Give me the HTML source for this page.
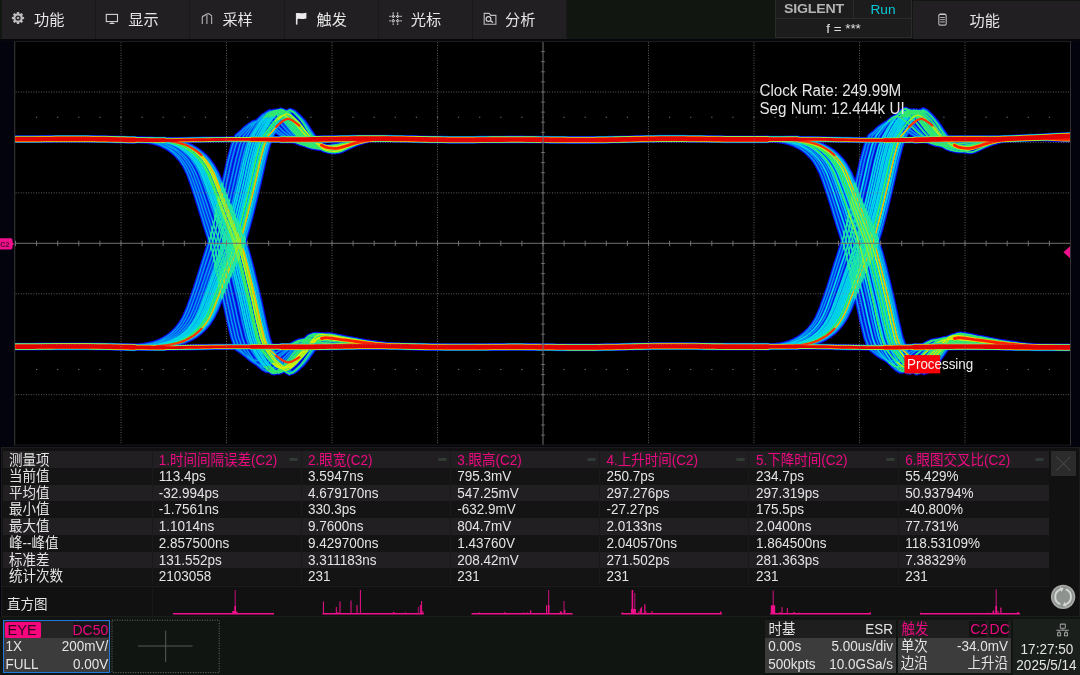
<!DOCTYPE html>
<html lang="zh-CN">
<head>
<meta charset="utf-8">
<title>SIGLENT Eye Diagram</title>
<style>
*{box-sizing:border-box;margin:0;padding:0}
html,body{width:1080px;height:675px;overflow:hidden;background:#02030d}
body{position:relative;will-change:transform;font-family:"Liberation Sans","Noto Sans CJK SC",sans-serif;font-size:13.5px;color:#e4e4e4;line-height:1}
.abs{position:absolute}
.t{transform:scaleY(1.06);transform-origin:0 80%}
/* top bar */
#top{position:absolute;left:0;top:0;width:1080px;height:39px;background:#111611}
.mb{position:absolute;top:0;height:38.5px;background:#221f22;border-right:1px solid #1a181a}
.mb span{position:absolute;left:32px;top:11.6px;font-size:15.2px;line-height:16px;color:#e6e6e6;white-space:nowrap}
.mb svg{position:absolute;left:9.2px;top:11.1px;width:14px;height:14px;overflow:visible}
#topline{position:absolute;left:0;top:38.5px;width:1080px;height:3px;background:#05060c}
#sig{position:absolute;left:775px;top:0;width:137px;height:38px;background:#1c1c1c;border:1px solid #2b2b2b;border-top:none}
#sig .l{position:absolute;left:0;top:0;width:78px;height:18.5px;border-right:1px solid #2b2b2b;border-bottom:1px solid #2b2b2b}
#sig .r{position:absolute;left:78px;top:0;width:58px;height:18.5px;border-bottom:1px solid #2b2b2b}
#logo{position:absolute;left:8.4px;top:2.2px;font-weight:bold;font-size:13.3px;line-height:14px;color:#b4b4b4;letter-spacing:-0.2px;white-space:nowrap;transform-origin:0 50%;transform:scaleX(1.065)}
#run{position:absolute;left:0;width:58px;top:1.8px;text-align:center;font-size:13.7px;line-height:15px;color:#0bc6d6}
#freq{position:absolute;left:0;width:135px;top:20.6px;text-align:center;font-size:13.4px;line-height:15px;color:#e0e0e0}
#rb{position:absolute;left:912.5px;top:0.5px;width:167.5px;height:38px;background:#221f22}
#rb span{position:absolute;left:57px;top:12.5px;font-size:15.2px;line-height:16px;color:#e6e6e6}
/* grid */
#scope{position:absolute;left:0;top:39px;width:1080px;height:409px}
/* table */
#panel{position:absolute;left:0.5px;top:447px;width:1079px;height:169.5px;background:#111111;border:1px solid #1d1d1d}
.row{position:absolute;left:3.2px;width:1045.8px;height:16.75px}
.row.a{background:#221f22}
.row.b{background:#141414}
.cell{transform:scaleY(1.06);transform-origin:0 77%;position:absolute;top:1px;height:100%;white-space:nowrap;font-size:13.5px;line-height:16.75px}
.pk{color:#ea0a80}
.sep{position:absolute;top:451px;width:1px;height:134px;background:#1a1a1a}
.dash{position:absolute;top:457.6px;width:9px;height:3px;border-radius:1.4px;background:#2f3b34}
/* bottom */
#bot{position:absolute;left:0;top:617px;width:1080px;height:58px;background:#111511}
.box{position:absolute;top:620px;height:53px;background:#3c3c3c}
.box .t{position:absolute;white-space:nowrap;font-size:13.5px;line-height:15px}
</style>
</head>
<body>
<div id="top">
  <div class="mb" style="left:2px;width:94.2px"><svg viewBox="0 0 14 14"><g fill="#bdbdbd"><g id="gt"><path d="M5.5 3.6L5.9 0.9H8.1L8.5 3.6Z"/></g><use href="#gt" transform="rotate(45 7 7)"/><use href="#gt" transform="rotate(90 7 7)"/><use href="#gt" transform="rotate(135 7 7)"/><use href="#gt" transform="rotate(180 7 7)"/><use href="#gt" transform="rotate(225 7 7)"/><use href="#gt" transform="rotate(270 7 7)"/><use href="#gt" transform="rotate(315 7 7)"/></g><circle cx="7" cy="7" r="3.55" fill="none" stroke="#bdbdbd" stroke-width="1.9"/><circle cx="7" cy="7" r="1.35" fill="#a8a8a8"/></svg><span>功能</span></div>
  <div class="mb" style="left:96.2px;width:94.2px"><svg viewBox="0 0 14 14"><rect x="1.3" y="3.4" width="11.2" height="7.2" fill="none" stroke="#d2d2d2" stroke-width="1.1"/><path d="M7 10.6V12.4M4.6 12.5H9.4" stroke="#d2d2d2" stroke-width="1.1" fill="none"/></svg><span>显示</span></div>
  <div class="mb" style="left:190.4px;width:94.2px"><svg viewBox="0 0 14 14"><path d="M2 5.6C4.5 5.2 6 2.6 8.2 2.6C10 2.6 11 4.2 12 5.4" fill="none" stroke="#b8b8b8" stroke-width="1.1"/><path d="M2.3 5.8V13M6.9 4V13M11.6 5.4V13" stroke="#a8a8a8" stroke-width="1.2" fill="none"/></svg><span>采样</span></div>
  <div class="mb" style="left:284.6px;width:94.2px"><svg viewBox="0 0 14 14"><path d="M2.7 2V13.6" stroke="#e0e0e0" stroke-width="1.6" fill="none"/><path d="M3 2.2C5.5 1.2 7.6 3 12.4 1.8V7.6C8.5 8.8 6 7 3 8.2Z" fill="#ececec"/></svg><span>触发</span></div>
  <div class="mb" style="left:378.8px;width:94.2px"><svg viewBox="0 0 14 14"><path d="M5.2 1.4V13.8M9.6 1.4V13.8M1.4 5.4H13.8M1.4 9.8H13.8" stroke="#dcdcdc" stroke-width="1.3" stroke-dasharray="1.3 0.9" fill="none"/></svg><span>光标</span></div>
  <div class="mb" style="left:473px;width:94.2px"><svg viewBox="0 0 14 14"><path d="M2.2 13.2V2.4H7.2L8.8 4.4H13.9V13.2Z" fill="none" stroke="#bdbdbd" stroke-width="1.1"/><circle cx="6.5" cy="8" r="2.4" fill="none" stroke="#d8d8d8" stroke-width="1.1"/><path d="M8.3 9.6L11 11.6" stroke="#d8d8d8" stroke-width="1.2"/></svg><span>分析</span></div>
  <div id="sig"><div class="l"><div id="logo">SIGLENT</div></div><div class="r"><div id="run">Run</div></div><div id="freq">f = ***</div></div>
  <div id="rb"><svg style="position:absolute;left:24px;top:12.5px;width:11px;height:14px;overflow:visible" viewBox="0 0 11 14" fill="none"><rect x="1.8" y="1.3" width="7.4" height="10.8" rx="1.3" stroke="#b2b2b2" stroke-width="1.15"/><path d="M2.6 1.2H8.4" stroke="#d6d6d6" stroke-width="1.1"/><path d="M3.2 4.5H7.8M3.2 6.6H7.8" stroke="#d2d2d2" stroke-width="0.8"/><path d="M3.2 8.9H7.8" stroke="#8c8c8c" stroke-width="1.5"/></svg><span>功能</span></div>
</div>
<div id="topline"></div>
<svg id="scope" viewBox="0 39 1080 409" width="1080" height="409">
<defs>
<clipPath id="gc"><rect x="15.2" y="42.0" width="1054.8" height="402.7"/></clipPath>
<clipPath id="br1"><path d="M150.9 343.2 154.9 342.0 158.8 340.4 162.8 338.3 166.7 335.9 170.6 332.7 174.4 328.8 178.3 323.9 182.1 317.5 185.9 308.8 189.7 298.1 193.4 287.4 196.8 276.3 200.1 265.3 203.5 254.7 207.0 243.1 210.7 228.7 214.4 212.4 218.2 195.7 222.2 178.7 226.3 160.6 230.3 145.4 234.4 135.8 238.4 128.7 242.6 122.5 246.7 117.6 L286.3 117.6 282.4 122.5 278.6 128.7 274.6 135.8 270.7 145.4 266.7 160.6 262.8 178.7 258.8 195.7 254.6 212.4 250.3 228.7 246.0 243.1 241.5 254.7 236.9 265.3 232.2 276.3 227.6 287.4 223.3 298.1 219.1 308.8 214.9 317.5 210.7 323.9 206.6 328.8 202.4 332.7 198.3 335.9 194.2 338.3 190.2 340.4 186.1 342.0 182.1 343.2Z"/></clipPath>
<clipPath id="bf1"><path d="M150.9 142.4 154.9 143.4 158.8 144.8 162.8 146.6 166.7 148.9 170.6 151.7 174.4 155.2 178.3 159.6 182.1 165.3 185.9 172.8 189.7 183.0 193.4 194.0 196.8 205.1 200.1 216.5 203.5 227.4 207.0 238.6 210.7 252.2 214.4 268.4 218.2 285.5 222.2 302.6 226.3 321.1 230.3 337.8 234.4 348.8 238.4 356.3 242.6 362.8 246.7 368.0 L286.3 368.0 282.4 362.8 278.6 356.3 274.6 348.8 270.7 337.8 266.7 321.1 262.8 302.6 258.8 285.5 254.6 268.4 250.3 252.2 246.0 238.6 241.5 227.4 236.9 216.5 232.2 205.1 227.6 194.0 223.3 183.0 219.1 172.8 214.9 165.3 210.7 159.6 206.6 155.2 202.4 151.7 198.3 148.9 194.2 146.6 190.2 144.8 186.1 143.4 182.1 142.4Z"/></clipPath>
<clipPath id="br2"><path d="M783.9 343.2 787.9 342.0 791.8 340.4 795.8 338.3 799.7 335.9 803.6 332.7 807.4 328.8 811.3 323.9 815.1 317.5 818.9 308.8 822.7 298.1 826.4 287.4 829.8 276.3 833.1 265.3 836.5 254.7 840.0 243.1 843.7 228.7 847.4 212.4 851.2 195.7 855.2 178.7 859.3 160.6 863.3 145.4 867.4 135.8 871.4 128.7 875.6 122.5 879.7 117.6 L919.3 117.6 915.4 122.5 911.6 128.7 907.6 135.8 903.7 145.4 899.7 160.6 895.8 178.7 891.8 195.7 887.6 212.4 883.3 228.7 879.0 243.1 874.5 254.7 869.9 265.3 865.2 276.3 860.6 287.4 856.3 298.1 852.1 308.8 847.9 317.5 843.7 323.9 839.6 328.8 835.4 332.7 831.3 335.9 827.2 338.3 823.2 340.4 819.1 342.0 815.1 343.2Z"/></clipPath>
<clipPath id="bf2"><path d="M783.9 142.4 787.9 143.4 791.8 144.8 795.8 146.6 799.7 148.9 803.6 151.7 807.4 155.2 811.3 159.6 815.1 165.3 818.9 172.8 822.7 183.0 826.4 194.0 829.8 205.1 833.1 216.5 836.5 227.4 840.0 238.6 843.7 252.2 847.4 268.4 851.2 285.5 855.2 302.6 859.3 321.1 863.3 337.8 867.4 348.8 871.4 356.3 875.6 362.8 879.7 368.0 L919.3 368.0 915.4 362.8 911.6 356.3 907.6 348.8 903.7 337.8 899.7 321.1 895.8 302.6 891.8 285.5 887.6 268.4 883.3 252.2 879.0 238.6 874.5 227.4 869.9 216.5 865.2 205.1 860.6 194.0 856.3 183.0 852.1 172.8 847.9 165.3 843.7 159.6 839.6 155.2 835.4 151.7 831.3 148.9 827.2 146.6 823.2 144.8 819.1 143.4 815.1 142.4Z"/></clipPath>
<path id="r1lo" d="M108.5 346.6l4 0 4-0.1 4-0.1 4-0.1 4-0.2 4-0.2 4-0.3 4-0.4 4-0.5 4-0.8 4-0.9 4-1.2 4-1.6 3.9-2.1 3.9-2.5 3.9-3.1 3.9-3.9 3.9-4.9 3.8-6.5 3.8-8.7 3.8-10.6 3.7-10.7 3.5-11.1 3.4-11 3.4-10.6 3.6-11.6 3.7-14.4 3.7-16.3 3.9-16.7 4-17 4-18.1 4.1-15.2 4-9.6 4.1-3.4 4.1-4 4.1-3.2 4.1-2.7 4.2-1.3 4.1 1.1 4.2 2.4 4.2 2.5 4.4 3.3 4.7 3.4 4.9 2.8 5 2.6 4.9 2.3 4.9 1.9 4.9 1.6 5 1 4.9 0.6 4.9 0.4 4.8 0 4.9-0.5 4.8-0.9 4.9-0.8 4.7-1 4.5-0.9 4.4-0.9 4-0.8 4-0.7 4-0.6 4-0.6 4-0.6 4-0.4 4-0.1 4 0 4 0 4 0.1 4 0 4 0 4 0.1 4 0.1 4 0.2 4 0.2 4 0.2 4 0.1 4 0.1 4 0 4 0M111.1 346.8l4-0.1 4 0 4-0.1 4-0.1 4-0.2 4-0.2 4-0.3 4-0.4 4-0.6 4-0.7 4-0.9 3.9-1.2 4-1.6 4-2.1 3.9-2.5 3.9-3.2 3.9-3.8 3.9-4.9 3.9-6.5 3.8-8.7 3.9-10.6 3.7-10.7 3.6-11.1 3.5-11 3.5-10.6 3.7-11.6 3.8-14.4 3.7-16.3 3.9-16.7 4-17 4-18.1 4.1-15.2 4-9.6 4.1-3.9 4.1-4.4 4.1-3.4 4.1-2.9 4.1-1.5 4.1 1.2 4.2 2.6 4.1 2.8 4.4 3.5 4.5 3.6 4.8 3.1 4.7 2.8 4.8 2.1 4.7 1.7 4.8 1.5 4.8 0.9 4.7 0.5 4.8 0.4 4.6 0 4.7-0.4 4.7-0.8 4.7-0.8 4.6-0.9 4.4-0.9 4.3-0.8 4-0.7 4-0.6 4-0.6 4-0.5 4-0.6 4-0.5 4-0.1 4 0 4 0 4 0.1 4 0 4 0 4 0.1 4 0.1 4 0.2 4 0.2 4 0.2 4 0.2 4 0.1 4 0 4 0M114.1 346.8l4-0.1 4 0 4-0.1 4-0.2 4-0.1 4-0.2 4-0.3 4-0.5 4-0.5 4-0.7 4-0.9 4-1.2 3.9-1.7 4-2 4-2.5 3.9-3.2 3.9-3.9 3.9-4.9 3.9-6.4 3.9-8.7 3.9-10.6 3.8-10.7 3.7-11.1 3.7-11.1 3.6-10.5 3.8-11.6 3.8-14.4 3.8-16.3 3.9-16.7 4-17.1 4.1-18 4-15.3 4-9.6 4.1-4.8 4-4.9 4.1-3.8 4.1-3.3 4.1-1.6 4.1 1.3 4.1 2.9 4.1 3.1 4.2 4 4.4 4.1 4.6 3.4 4.6 3.2 4.5 2.9 4.5 2.3 4.6 2 4.6 1.3 4.6 0.7 4.5 0.5 4.5 0 4.5-0.6 4.5-1.1 4.5-1.1 4.4-1.1 4.4-1.3 4.2-1.1 4-0.9 4-0.9 4-0.8 4-0.8 4-0.6 4-0.5 4-0.1 4 0 4 0 4 0 4 0 4 0.1 4 0.1 4 0.1 4 0.2 4 0.3 4 0.2 4 0.2 4 0.1 4 0 4 0M116.6 347l4 0 4-0.1 4-0.1 4-0.1 4-0.2 4-0.2 4-0.3 4-0.4 4-0.5 4-0.8 4-0.9 4-1.2 4-1.6 4-2.1 3.9-2.5 4-3.1 3.9-3.9 4-4.9 3.9-6.5 3.9-8.7 4-10.6 3.8-10.7 3.8-11.1 3.8-11 3.7-10.6 3.8-11.6 3.9-14.4 3.9-16.3 3.9-16.7 4-17 4.1-18.1 4-15.2 4-9.6 4-6.5 4.1-5.9 4-4.6 4.1-3.9 4-2 4.1 1.6 4.1 3.4 4.1 3.8 4.1 4.7 4.3 4.9 4.4 4.2 4.4 3.8 4.4 2 4.3 1.6 4.4 1.3 4.5 0.8 4.4 0.5 4.3 0.3 4.4 0.1 4.3-0.4 4.4-0.8 4.3-0.7 4.3-0.8 4.3-0.8 4.1-0.8 4-0.6 4-0.6 4-0.5 4-0.5 4-0.9 4-0.5 4-0.2 4 0 4 0.1 4 0 4 0 4 0.1 4 0.1 4 0.1 4 0.3 4 0.3 4 0.3 4 0.2 4 0.1 4 0 4 0M119.1 347.1l4-0.1 4 0 4-0.1 4-0.1 4-0.2 4-0.2 4-0.3 4-0.5 4-0.5 4-0.7 4-0.9 3.9-1.2 4-1.6 4-2.1 4-2.5 4-3.2 3.9-3.8 4-4.9 4-6.5 3.9-8.7 4-10.6 3.9-10.7 3.9-11.1 3.8-11.1 3.9-10.5 3.9-11.6 3.9-14.4 4-16.3 3.9-16.7 4-17.1 4-18 4-15.2 4-9.6 4.1-7.4 4-6.3 4-5 4-4.2 4.1-2.2 4 1.7 4.1 3.8 4 4 4.1 5.1 4.2 5.4 4.2 4.5 4.2 4 4.3 2.3 4.2 1.9 4.2 1.5 4.3 1 4.2 0.5 4.2 0.4 4.2 0.1 4.2-0.5 4.2-0.9 4.2-0.8 4.2-0.9 4.2-1 4-0.8 4-0.8 4-0.6 4-0.6 4-0.7 4-0.8 4-0.7 4-0.1 4 0 4 0 4 0.1 4 0 4 0.1 4 0 4 0.2 4 0.3 4 0.3 4 0.3 4 0.3 4 0.1 4 0 4 0M135.5 346.8l4 0 4-0.1 4-0.1 4-0.1 4-0.2 4-0.2 4-0.3 4-0.4 4-0.5 4-0.8 4-0.9 4-1.2 4-1.6 4.1-2.1 4-2.5 4.1-3.1 4.2-3.9 4.1-4.9 4.1-6.5 4.2-8.7 4.1-10.6 4.3-10.7 4.5-11.1 4.6-11 4.5-10.6 4.4-11.6 4.3-14.4 4.2-16.3 4.2-16.7 4-17 3.9-18.1 4-15.2 3.9-9.6 4-7.7 3.9-6.5 3.9-5.1 3.9-4.4 3.8-2.2 3.9 1.8 3.8 3.8 3.8 4.2 3.7 5.3 3.3 5.4 3.2 4.6 3.1 4.3 3.2 3.2 3.1 2.6 3.2 2.2 3.1 1.4 3.1 0.8 3.2 0.5 3.2 0.1 3.2-0.7 3.2-1.2 3.3-1.2 3.3-1.3 3.5-1.4 3.7-1.2 3.9-1 4-1 4-0.9 4-0.8 4-0.9 4-0.7 4-0.2 4 0.1 4 0 4 0 4 0.1 4 0 4 0.1 4 0.2 4 0.3 4 0.3 4 0.3 4 0.3 4 0.1 4 0 4 0M136.5 346.8l4-0.1 4 0 4-0.1 4-0.2 4-0.1 4-0.2 4-0.4 4-0.4 4-0.5 4-0.7 4-0.9 4-1.2 4-1.7 4.1-2 4.1-2.5 4.1-3.2 4.1-3.9 4.1-4.9 4.2-6.4 4.2-8.7 4.2-10.6 4.3-10.7 4.5-11.1 4.6-11.1 4.6-10.5 4.4-11.6 4.3-14.4 4.3-16.3 4.1-16.7 4-17.1 4-18.1 3.9-15.2 4-9.6 3.9-7.1 3.9-6.2 3.9-4.9 3.9-4.1 3.8-2.1 3.9 1.7 3.8 3.6 3.8 4 3.6 5 3.3 5.2 3.1 4.4 3 4 3.1 3.8 3.1 3.1 3.1 2.6 3 1.7 3.1 0.9 3.1 0.6 3.2 0.1 3.1-0.8 3.2-1.5 3.1-1.4 3.3-1.5 3.5-1.6 3.6-1.4 4-1.3 4-1.1 4-1.1 4-1 4-0.8 4-0.6 4-0.2 4 0 4 0 4 0.1 4 0 4 0.1 4 0 4 0.2 4 0.3 4 0.3 4 0.3 4 0.2 4 0.2 4 0 4 0"/>
<path id="r1mid" d="M120.5 346.5l4 0 4-0.1 4-0.1 4-0.1 4-0.1 4-0.2 4-0.4 4-0.4 4-0.5 4-0.7 4-1 4-1.2 4-1.6 4-2 4-2.5 4-3.2 3.9-3.9 4-4.9 4-6.4 4-8.7 3.9-10.7 4-10.6 3.9-11.1 3.9-11.1 4-10.5 3.9-11.7 4-14.3 3.9-16.3 4-16.7 4-17.1 4-18.1 4-15.2 4-9.6 4-6.9 4-6.1 4.1-4.8 4-4.1 4-2 4 1.6 4 3.6 4.1 3.9 4 4.9 4.1 5.2 4.2 4.3 4.1 3.9 4.1 2.7 4.1 2.2 4.2 1.8 4.1 1.2 4.2 0.6 4.1 0.4 4.1 0.1 4.1-0.6 4.1-1 4.2-1 4.1-1 4-1.2 4.1-1 4-0.9 4-0.8 4-0.7 4-0.7 4-0.8 4-0.6 4-0.2 4 0 4 0 4 0.1 4 0 4 0.1 4 0.1 4 0.1 4 0.3 4 0.3 4 0.3 4 0.2 4 0.1 4 0 4 0M122.1 346.3l4 0 4-0.1 4-0.1 4-0.1 4-0.1 4-0.3 4-0.3 4-0.4 4-0.5 4-0.7 4-1 4-1.2 4-1.6 4-2.1 4-2.4 4-3.2 4-3.9 4-4.9 4-6.4 4-8.7 4-10.7 4-10.6 4-11.1 4-11.1 3.9-10.5 4-11.7 4-14.3 4-16.3 4-16.7 4-17.1 4-18.1 4-15.2 4-9.6 4-7.1 4-6.3 4-4.9 4-4.1 4-2.1 4 1.7 4 3.6 4 4 4.1 5 4 5.3 4 4.4 4 4 4 2.3 4.1 1.9 4 1.5 4 1 4 0.6 4.1 0.4 4 0 4-0.5 4-0.9 4.1-0.8 4-0.9 4-1 4-0.8 4-0.8 4-0.7 4-0.6 4-0.6 4-0.9 4-0.6 4-0.1 4 0 4 0 4 0 4 0.1 4 0 4 0.1 4 0.2 4 0.3 4 0.3 4 0.3 4 0.2 4 0.1 4 0 4 0M124 346.7l4 0 4-0.1 4-0.1 4-0.1 4-0.1 4-0.3 4-0.3 4-0.4 4-0.5 4-0.8 4-0.9 4-1.2 4-1.6 4-2.1 4-2.4 4-3.2 4-3.9 4.1-4.9 4-6.4 4-8.7 4-10.7 4-10.7 4.1-11.1 4.1-11 4-10.6 4.1-11.6 4-14.3 4-16.3 4.1-16.8 4-17 3.9-18.1 4-15.2 4-9.6 4-7.4 4-6.4 4-5 4-4.3 4-2.2 4 1.8 3.9 3.8 4 4 4 5.2 3.9 5.3 3.9 4.6 3.9 4.1 3.9 3.2 3.9 2.6 3.9 2.2 3.9 1.4 3.9 0.8 3.9 0.5 3.9 0.1 3.9-0.7 3.9-1.3 4-1.1 3.9-1.3 3.9-1.4 4-1.2 4-1 4-1 4-0.9 4-0.8 4-0.9 4-0.6 4-0.2 4 0 4 0 4 0.1 4 0 4 0.1 4 0.1 4 0.2 4 0.2 4 0.4 4 0.2 4 0.3 4 0.1 4 0 4 0M125.8 346.7l4-0.1 4 0 4-0.1 4-0.1 4-0.2 4-0.2 4-0.3 4-0.4 4-0.6 4-0.7 4-0.9 4-1.2 4-1.6 4-2.1 4.1-2.5 4-3.2 4-3.8 4-4.9 4.1-6.5 4-8.7 4.1-10.6 4-10.7 4.2-11.1 4.1-11 4.1-10.6 4.1-11.6 4.1-14.4 4.1-16.3 4-16.7 4-17 4-18.1 4-15.2 4-9.6 4-7.5 3.9-6.5 4-5.1 4-4.3 3.9-2.2 4 1.8 4 3.8 3.9 4.1 3.9 5.2 3.9 5.4 3.7 4.6 3.8 4.1 3.8 3.3 3.8 2.6 3.8 2.2 3.7 1.4 3.8 0.8 3.8 0.5 3.8 0.1 3.8-0.7 3.8-1.2 3.8-1.2 3.8-1.3 3.9-1.4 3.9-1.2 4-1.1 4-0.9 4-0.9 4-0.9 4-0.8 4-0.7 4-0.1 4 0 4 0 4 0 4 0.1 4 0 4 0.1 4 0.2 4 0.3 4 0.3 4 0.3 4 0.3 4 0.1 4 0 4 0M127.5 346.5l4-0.1 4 0 4-0.1 4-0.1 4-0.2 4-0.2 4-0.3 4-0.5 4-0.5 4-0.7 4-0.9 4-1.2 4-1.6 4-2.1 4-2.5 4.1-3.2 4-3.8 4-4.9 4.1-6.5 4.1-8.7 4-10.6 4.1-10.7 4.2-11.1 4.2-11.1 4.2-10.5 4.2-11.6 4.1-14.4 4.1-16.3 4-16.7 4-17.1 4-18 4-15.2 4-9.6 4-7.8 3.9-6.6 4-5.1 3.9-4.4 4-2.2 3.9 1.8 4 3.8 3.9 4.2 3.9 5.3 3.7 5.5 3.7 4.7 3.7 4.2 3.6 2.9 3.7 2.3 3.7 1.9 3.7 1.2 3.6 0.7 3.7 0.4 3.7 0.1 3.7-0.6 3.7-1.1 3.7-1 3.8-1.1 3.8-1.2 3.9-1.1 3.9-0.9 4-0.9 4-0.7 4-0.8 4-0.9 4-0.6 4-0.2 4 0 4 0.1 4 0 4 0 4 0.1 4 0.1 4 0.2 4 0.3 4 0.3 4 0.3 4 0.2 4 0.2 4 0 4 0M128.6 346.3l4 0 4-0.1 4-0.1 4-0.1 4-0.2 4-0.2 4-0.3 4-0.4 4-0.5 4-0.8 4-0.9 4-1.2 4-1.6 4-2.1 4.1-2.5 4-3.1 4.1-3.9 4-4.9 4.1-6.5 4.1-8.7 4.1-10.6 4.1-10.7 4.2-11.1 4.3-11 4.2-10.6 4.2-11.6 4.2-14.4 4.1-16.3 4-16.7 4-17 4-18.1 4-15.2 4-9.6 3.9-7.5 4-6.4 3.9-5.1 4-4.3 3.9-2.2 4 1.8 3.9 3.8 3.9 4.1 3.8 5.2 3.7 5.4 3.6 4.5 3.6 4.1 3.6 3.7 3.6 3 3.6 2.5 3.6 1.5 3.6 0.9 3.6 0.6 3.6 0.1 3.7-0.8 3.6-1.4 3.6-1.3 3.7-1.5 3.8-1.5 3.8-1.4 4-1.2 4-1.1 4-1 4-0.9 4-0.9 4-0.7 4-0.1 4 0 4 0 4 0 4 0.1 4 0 4 0.1 4 0.2 4 0.3 4 0.3 4 0.3 4 0.3 4 0.1 4 0 4 0M131 347.1l4 0 4-0.1 4-0.1 4-0.1 4-0.1 4-0.3 4-0.3 4-0.4 4-0.5 4-0.7 4-1 4-1.2 4-1.6 4-2 4.1-2.5 4-3.2 4.1-3.9 4.1-4.9 4.1-6.4 4.1-8.7 4.1-10.7 4.2-10.6 4.3-11.1 4.4-11.1 4.3-10.5 4.3-11.7 4.2-14.3 4.1-16.3 4.1-16.7 4-17.1 4-18.1 4-15.2 3.9-9.6 4-7.1 3.9-6.3 4-4.9 3.9-4.2 3.9-2.1 3.9 1.7 3.9 3.7 3.9 4 3.7 5 3.6 5.3 3.5 4.4 3.4 4 3.4 3.8 3.5 3.1 3.4 2.6 3.4 1.6 3.5 1 3.4 0.6 3.5 0.1 3.5-0.8 3.5-1.5 3.5-1.4 3.6-1.5 3.6-1.6 3.8-1.5 4-1.2 4-1.2 4-1 4-1 4-0.9 4-0.6 4-0.1 4 0 4 0 4 0 4 0.1 4 0 4 0.1 4 0.2 4 0.3 4 0.3 4 0.3 4 0.2 4 0.1 4 0 4 0M134.5 346.9l4 0 4-0.1 4-0.1 4-0.1 4-0.1 4-0.2 4-0.4 4-0.4 4-0.5 4-0.7 4-1 4-1.1 4.1-1.7 4-2 4.1-2.5 4.1-3.2 4.1-3.9 4.1-4.9 4.1-6.4 4.2-8.7 4.1-10.6 4.3-10.7 4.4-11.1 4.6-11.1 4.5-10.5 4.3-11.7 4.3-14.3 4.2-16.3 4.1-16.7 4-17.1 4-18.1 4-15.2 3.9-9.6 3.9-7.6 4-6.5 3.9-5.1 3.9-4.3 3.8-2.2 3.9 1.8 3.8 3.8 3.9 4.1 3.6 5.3 3.4 5.4 3.3 4.6 3.1 4.2 3.3 2.4 3.2 2 3.2 1.6 3.2 1 3.1 0.6 3.3 0.4 3.3 0.1 3.3-0.5 3.2-1 3.3-0.8 3.4-1 3.5-1 3.7-0.9 4-0.8 4-0.7 4-0.6 4-0.7 4-0.9 4-0.6 4-0.2 4 0 4 0 4 0.1 4 0 4 0.1 4 0.1 4 0.2 4 0.3 4 0.3 4 0.3 4 0.2 4 0.1 4 0 4 0"/>
<path id="r1hi" d="M129.5 346.8l4 0 4 0 4-0.1 4-0.2 4-0.1 4-0.2 4-0.4 4-0.4 4-0.5 4-0.7 4-1 4-1.1 4-1.7 4.1-2 4-2.5 4.1-3.2 4-3.9 4.1-4.9 4.1-6.4 4.1-8.7 4-10.6 4.2-10.7 4.3-11.1 4.3-11.1 4.3-10.5 4.2-11.6 4.1-14.4 4.1-16.3 4.1-16.7 4-17.1 4-18.1 4-15.2 4-9.6 3.9-5.6 4-5.4 3.9-4.2 3.9-3.5 4-1.8 3.9 1.4 3.9 3.2 3.9 3.4 3.8 4.3 3.7 4.5 3.5 3.8 3.5 3.4 3.6 2.1 3.5 1.7 3.6 1.4 3.5 0.9 3.5 0.5 3.5 0.3 3.6 0.1 3.6-0.5 3.6-0.7 3.6-0.8 3.6-0.8 3.7-0.9 3.9-0.8 4-0.6 4-0.7 4-0.5 4-0.6 4-0.7 4-0.5 4-0.2 4 0 4 0 4 0.1 4 0 4 0.1 4 0 4 0.2 4 0.2 4 0.3 4 0.3 4 0.1 4 0.1 4 0.1 4 0M132.1 346.3l4-0.1 4 0 4-0.1 4-0.1 4-0.2 4-0.2 4-0.3 4-0.5 4-0.5 4-0.7 4-0.9 4-1.2 4-1.7 4.1-2 4-2.5 4.1-3.2 4.1-3.9 4.1-4.9 4.1-6.4 4.1-8.7 4.1-10.6 4.3-10.7 4.3-11.1 4.4-11.1 4.4-10.5 4.3-11.6 4.2-14.4 4.2-16.3 4.1-16.7 4-17.1 4-18 4-15.2 3.9-9.7 4-5.9 3.9-5.6 3.9-4.3 3.9-3.7 3.9-1.9 3.9 1.5 3.9 3.3 3.9 3.5 3.7 4.5 3.5 4.6 3.4 4 3.3 3.5 3.4 3.8 3.4 3.1 3.4 2.6 3.3 1.7 3.3 0.9 3.4 0.6 3.5 0.1 3.4-0.8 3.4-1.5 3.4-1.4 3.5-1.5 3.6-1.6 3.8-1.4 4-1.3 4-1.1 4-1.1 4-1 4-0.7 4-0.6 4-0.1 4 0 4 0 4 0 4 0.1 4 0 4 0.1 4 0.2 4 0.2 4 0.3 4 0.3 4 0.2 4 0.1 4 0 4 0"/>
<path id="r1tl" d="M288.5 139.1l4.9 2.3 4.9 1.9 4.9 1.6 5 1 4.9 0.6 4.9 0.4 4.8 0 4.9-0.5 4.8-0.9 4.9-0.8 4.7-1 4.5-0.9 4.4-0.9 4-0.8 4-0.7 4-0.6 4-0.6 4-0.6 4-0.4 4-0.1 4 0 4 0 4 0.1 4 0 4 0 4 0.1 4 0.1 4 0.2 4 0.2 4 0.2 4 0.1M291 139.3l4.8 2.1 4.7 1.7 4.8 1.5 4.8 0.9 4.7 0.5 4.8 0.4 4.6 0 4.7-0.4 4.7-0.8 4.7-0.8 4.6-0.9 4.4-0.9 4.3-0.8 4-0.7 4-0.6 4-0.6 4-0.5 4-0.6 4-0.5 4-0.1 4 0 4 0 4 0.1 4 0 4 0 4 0.1 4 0.1 4 0.2 4 0.2 4 0.2 4 0.2M294.1 139.3l4.5 2.9 4.5 2.3 4.6 2 4.6 1.3 4.6 0.7 4.5 0.5 4.5 0 4.5-0.6 4.5-1.1 4.5-1.1 4.4-1.1 4.4-1.3 4.2-1.1 4-0.9 4-0.9 4-0.8 4-0.8 4-0.6 4-0.5 4-0.1 4 0 4 0 4 0 4 0 4 0.1 4 0.1 4 0.1 4 0.2 4 0.3 4 0.2 4 0.2M296.6 139.5l4.4 2 4.3 1.6 4.4 1.3 4.5 0.8 4.4 0.5 4.3 0.3 4.4 0.1 4.3-0.4 4.4-0.8 4.3-0.7 4.3-0.8 4.3-0.8 4.1-0.8 4-0.6 4-0.6 4-0.5 4-0.5 4-0.9 4-0.5 4-0.2 4 0 4 0.1 4 0 4 0 4 0.1 4 0.1 4 0.1 4 0.3 4 0.3 4 0.3 4 0.2M299 139.5l4.3 2.3 4.2 1.9 4.2 1.5 4.3 1 4.2 0.5 4.2 0.4 4.2 0.1 4.2-0.5 4.2-0.9 4.2-0.8 4.2-0.9 4.2-1 4-0.8 4-0.8 4-0.6 4-0.6 4-0.7 4-0.8 4-0.7 4-0.1 4 0 4 0 4 0.1 4 0 4 0.1 4 0 4 0.2 4 0.3 4 0.3 4 0.3 4 0.3M264 117.7l4-4.1 4-2 4 1.6 4 3.6 4.1 3.9 4 4.9 4.1 5.2 4.2 4.3 4.1 3.9 4.1 2.7 4.1 2.2 4.2 1.8 4.1 1.2 4.2 0.6 4.1 0.4 4.1 0.1 4.1-0.6 4.1-1 4.2-1 4.1-1 4-1.2 4.1-1 4-0.9 4-0.8 4-0.7 4-0.7 4-0.8 4-0.6 4-0.2 4 0 4 0 4 0.1 4 0 4 0.1 4 0.1 4 0.1 4 0.3 4 0.3 4 0.3 4 0.2M266 117l4-4.1 4-2.1 4 1.7 4 3.6 4 4 4.1 5 4 5.3 4 4.4 4 4 4 2.3 4.1 1.9 4 1.5 4 1 4 0.6 4.1 0.4 4 0 4-0.5 4-0.9 4.1-0.8 4-0.9 4-1 4-0.8 4-0.8 4-0.7 4-0.6 4-0.6 4-0.9 4-0.6 4-0.1 4 0 4 0 4 0 4 0.1 4 0 4 0.1 4 0.2 4 0.3 4 0.3 4 0.3 4 0.2M268.4 116.9l4-4.3 4-2.2 4 1.8 3.9 3.8 4 4 4 5.2 3.9 5.3 3.9 4.6 3.9 4.1 3.9 3.2 3.9 2.6 3.9 2.2 3.9 1.4 3.9 0.8 3.9 0.5 3.9 0.1 3.9-0.7 3.9-1.3 4-1.1 3.9-1.3 3.9-1.4 4-1.2 4-1 4-1 4-0.9 4-0.8 4-0.9 4-0.6 4-0.2 4 0 4 0 4 0.1 4 0 4 0.1 4 0.1 4 0.2 4 0.2 4 0.4 4 0.2 4 0.3M270.7 116.6l4-4.3 3.9-2.2 4 1.8 4 3.8 3.9 4.1 3.9 5.2 3.9 5.4 3.7 4.6 3.8 4.1 3.8 3.3 3.8 2.6 3.8 2.2 3.7 1.4 3.8 0.8 3.8 0.5 3.8 0.1 3.8-0.7 3.8-1.2 3.8-1.2 3.8-1.3 3.9-1.4 3.9-1.2 4-1.1 4-0.9 4-0.9 4-0.9 4-0.8 4-0.7 4-0.1 4 0 4 0 4 0 4 0.1 4 0 4 0.1 4 0.2 4 0.3 4 0.3 4 0.3 4 0.3M272.8 116l3.9-4.4 4-2.2 3.9 1.8 4 3.8 3.9 4.2 3.9 5.3 3.7 5.5 3.7 4.7 3.7 4.2 3.6 2.9 3.7 2.3 3.7 1.9 3.7 1.2 3.6 0.7 3.7 0.4 3.7 0.1 3.7-0.6 3.7-1.1 3.7-1 3.8-1.1 3.8-1.2 3.9-1.1 3.9-0.9 4-0.9 4-0.7 4-0.8 4-0.9 4-0.6 4-0.2 4 0 4 0.1 4 0 4 0 4 0.1 4 0.1 4 0.2 4 0.3 4 0.3 4 0.3 4 0.2M274.2 116.3l4-4.3 3.9-2.2 4 1.8 3.9 3.8 3.9 4.1 3.8 5.2 3.7 5.4 3.6 4.5 3.6 4.1 3.6 3.7 3.6 3 3.6 2.5 3.6 1.5 3.6 0.9 3.6 0.6 3.6 0.1 3.7-0.8 3.6-1.4 3.6-1.3 3.7-1.5 3.8-1.5 3.8-1.4 4-1.2 4-1.1 4-1 4-0.9 4-0.9 4-0.7 4-0.1 4 0 4 0 4 0 4 0.1 4 0 4 0.1 4 0.2 4 0.3 4 0.3 4 0.3 4 0.3M277.3 117.8l3.9-4.2 3.9-2.1 3.9 1.7 3.9 3.7 3.9 4 3.7 5 3.6 5.3 3.5 4.4 3.4 4 3.4 3.8 3.5 3.1 3.4 2.6 3.4 1.6 3.5 1 3.4 0.6 3.5 0.1 3.5-0.8 3.5-1.5 3.5-1.4 3.6-1.5 3.6-1.6 3.8-1.5 4-1.2 4-1.2 4-1 4-1 4-0.9 4-0.6 4-0.1 4 0 4 0 4 0 4 0.1 4 0 4 0.1 4 0.2 4 0.3 4 0.3 4 0.3 4 0.2M281.8 116.7l3.9-4.3 3.8-2.2 3.9 1.8 3.8 3.8 3.9 4.1 3.6 5.3 3.4 5.4 3.3 4.6 3.1 4.2 3.3 2.4 3.2 2 3.2 1.6 3.2 1 3.1 0.6 3.3 0.4 3.3 0.1 3.3-0.5 3.2-1 3.3-0.8 3.4-1 3.5-1 3.7-0.9 4-0.8 4-0.7 4-0.6 4-0.7 4-0.9 4-0.6 4-0.2 4 0 4 0 4 0.1 4 0 4 0.1 4 0.1 4 0.2 4 0.3 4 0.3 4 0.3 4 0.2M315.5 139.3l3.2 3.2 3.1 2.6 3.2 2.2 3.1 1.4 3.1 0.8 3.2 0.5 3.2 0.1 3.2-0.7 3.2-1.2 3.3-1.2 3.3-1.3 3.5-1.4 3.7-1.2 3.9-1 4-1 4-0.9 4-0.8 4-0.9 4-0.7 4-0.2 4 0.1 4 0 4 0 4 0.1 4 0 4 0.1 4 0.2 4 0.3 4 0.3 4 0.3 4 0.3M316.5 139.2l3.1 3.8 3.1 3.1 3.1 2.6 3 1.7 3.1 0.9 3.1 0.6 3.2 0.1 3.1-0.8 3.2-1.5 3.1-1.4 3.3-1.5 3.5-1.6 3.6-1.4 4-1.3 4-1.1 4-1.1 4-1 4-0.8 4-0.6 4-0.2 4 0 4 0 4 0.1 4 0 4 0.1 4 0 4 0.2 4 0.3 4 0.3 4 0.3 4 0.2"/>
<path id="r1th" d="M275.4 120.6l3.9-3.5 4-1.8 3.9 1.4 3.9 3.2 3.9 3.4 3.8 4.3 3.7 4.5 3.5 3.8 3.5 3.4 3.6 2.1 3.5 1.7 3.6 1.4 3.5 0.9 3.5 0.5 3.5 0.3 3.6 0.1 3.6-0.5 3.6-0.7 3.6-0.8 3.6-0.8 3.7-0.9 3.9-0.8 4-0.6 4-0.7 4-0.5 4-0.6 4-0.7 4-0.5 4-0.2 4 0 4 0 4 0.1 4 0 4 0.1 4 0 4 0.2 4 0.2 4 0.3 4 0.3 4 0.1M278.7 119.4l3.9-3.7 3.9-1.9 3.9 1.5 3.9 3.3 3.9 3.5 3.7 4.5 3.5 4.6 3.4 4 3.3 3.5 3.4 3.8 3.4 3.1 3.4 2.6 3.3 1.7 3.3 0.9 3.4 0.6 3.5 0.1 3.4-0.8 3.4-1.5 3.4-1.4 3.5-1.5 3.6-1.6 3.8-1.4 4-1.3 4-1.1 4-1.1 4-1 4-0.7 4-0.6 4-0.1 4 0 4 0 4 0 4 0.1 4 0 4 0.1 4 0.2 4 0.2 4 0.3 4 0.3 4 0.2"/>
<path id="r1red" d="M157.1 346.1l4-0.3 4-0.4 4-0.5 4-0.8 4-0.9 4-1.2 4.1-1.6 4-2.1 4.1-2.4 4.1-3.2 4.1-3.9M276.1 126.9l3.9-3.6 3.9-3.1 3.9-1.5 3.9 1.2 3.9 2.7 3.8 3"/>
<path id="r1rt" d="M321.5 145.2l3.2 1.6 3.3 0.8 3.3 0.5 3.3 0.3 3.4-0.2 3.4-0.9 3.3-1 3.4-1 3.5-1.2 3.7-1.1 3.9-0.9 4-0.9 4-0.8 4-0.7 4-0.7 4-0.5 4-0.3 4 0 4 0 4 0 4 0 4 0.1 4 0 4 0.1 4 0.2 4 0.2 4 0.2 4 0.2 4 0.2 4 0 4 0"/>
<path id="r1org" d="M133.1 346.8l4 0 4-0.1 4-0.1 4-0.1 4-0.2 4-0.2 4-0.3 4-0.4 4-0.5 4-0.8 4-0.9 4-1.2 4.1-1.6 4-2.1 4.1-2.4 4.1-3.2 4.1-3.9 4.1-4.9 4.1-6.4 4.1-8.7 4.1-10.7 4.3-10.7 4.4-11.1 4.5-11 4.4-10.6 4.3-11.6 4.2-14.4 4.2-16.3 4.1-16.7 4-17 4-18.1 4-15.2 3.9-9.6 4-4.3 3.9-4.6 3.9-3.6 3.9-3.1 3.9-1.5 3.9 1.2 3.9 2.7 3.8 3 3.7 3.7 3.5 3.8 3.3 3.2 3.3 3 3.3 2.7 3.3 2.2 3.3 1.9 3.2 1.1 3.3 0.7 3.3 0.4 3.4 0.1 3.4-0.6 3.3-1 3.4-1 3.5-1.1 3.5-1.1 3.8-1.1 4-0.9 4-0.8 4-0.7 4-0.7 4-0.7 4-0.4 4-0.1 4 0 4 0 4 0 4 0.1 4 0 4 0.1 4 0.1 4 0.2 4 0.2 4 0.2 4 0.2 4 0.1 4 0 4 0"/>
<path id="f1lo" d="M108.5 139.6l4 0 4 0.1 4 0.1 4 0.1 4 0.1 4 0.2 4 0.2 4 0.4 4 0.4 4 0.6 4 0.8 4 1.1 4 1.3 3.9 1.9 3.9 2.2 3.9 2.8 3.9 3.6 3.9 4.3 3.8 5.8 3.8 7.5 3.8 10.2 3.7 10.9 3.5 11.1 3.4 11.4 3.4 10.9 3.6 11.2 3.7 13.7 3.7 16.1 3.9 17.2 4 17 4 18.6 4.1 16.6 4 11 4.1 2.6 4.1 3.2 4.1 2.5 4.1 2.1 4.2 1.2 4.1-0.7 4.2-1.8 4.2-2 4.4-2.4 4.7-2.5 4.9-2.4 5-2.8 4.9-2.9 4.9-2.4 4.9-1 5-0.1 4.9 0.2 4.9 0.3 4.8 0.4 4.9 0.4 4.8 0.4 4.9 0.3 4.7 0.4 4.5 0.4 4.4 0.4 4 0.4 4 0.5 4 0.4 4 0.3 4 0.4 4 0.3 4 0.3 4 0.3 4 0.3 4 0.3 4 0.2 4 0.3 4 0.3 4 0.2 4 0.1 4 0.2 4 0.1 4 0.1 4 0 4 0 4 0M111.1 140.1l4 0 4 0.1 4 0 4 0.1 4 0.2 4 0.1 4 0.3 4 0.4 4 0.4 4 0.6 4 0.8 4 1 3.9 1.4 4 1.8 3.9 2.3 4 2.8 3.9 3.6 3.8 4.3 3.9 5.8 3.9 7.5 3.8 10.2 3.8 10.9 3.5 11.1 3.5 11.4 3.6 10.9 3.6 11.2 3.8 13.7 3.8 16.1 3.9 17.1 4 17.1 4 18.6 4 16.6 4.1 11 4 4 4.1 4.1 4.1 3.2 4.1 2.7 4.1 1.6 4.2-1 4.1-2.3 4.2-2.5 4.3-3.2 4.6-3.2 4.7-3.1 4.8-3.5 4.7-3.3 4.7-2.7 4.8-1 4.8-0.2 4.8 0.2 4.7 0.4 4.6 0.4 4.7 0.5 4.7 0.4 4.7 0.4 4.6 0.4 4.5 0.5 4.2 0.4 4 0.5 4 0.5 4 0.5 4 0.4 4 0.4 4 0.4 4 0.3 4 0.4 4 0.3 4 0.3 4 0.3 4 0.2 4 0.3 4 0.3 4 0.2 4 0.2 4 0.2 4 0.1 4 0.1 4 0 4 0M113.4 139.4l4 0 4 0 4 0.1 4 0.1 4 0.1 4 0.2 4 0.2 4 0.4 4 0.4 4 0.6 4 0.8 4 1.1 4 1.3 3.9 1.9 4 2.2 3.9 2.8 4 3.6 3.9 4.3 3.9 5.8 3.9 7.5 3.8 10.2 3.8 10.9 3.7 11.2 3.6 11.3 3.6 11 3.7 11.2 3.9 13.6 3.8 16.2 3.9 17.1 4 17 4 18.6 4 16.7 4.1 10.9 4 5 4.1 4.8 4.1 3.8 4 3.2 4.1 1.8 4.1-1.1 4.2-2.8 4.1-2.9 4.2-3.7 4.5-3.8 4.6-3.6 4.6-3.7 4.6-2.9 4.6-2.4 4.6-0.9 4.6-0.2 4.6 0.3 4.6 0.3 4.5 0.3 4.6 0.4 4.5 0.4 4.6 0.4 4.4 0.3 4.4 0.4 4.2 0.5 4 0.4 4 0.4 4 0.4 4 0.4 4 0.3 4 0.4 4 0.3 4 0.3 4 0.3 4 0.2 4 0.3 4 0.2 4 0.3 4 0.3 4 0.2 4 0.3 4 0.2 4 0.1 4 0.1 4 0 4 0M116.1 139.6l4 0 4 0.1 4 0.1 4 0.1 4 0.1 4 0.1 4 0.3 4 0.4 4 0.4 4 0.6 4 0.8 4 1 4 1.4 4 1.9 4 2.2 3.9 2.8 4 3.6 3.9 4.3 3.9 5.8 3.9 7.5 4 10.2 3.8 10.9 3.8 11.1 3.7 11.4 3.7 10.9 3.8 11.2 3.9 13.7 3.9 16.1 3.9 17.1 4 17.1 4 18.6 4.1 16.6 4 11 4 6.1 4.1 5.7 4 4.5 4.1 3.6 4 2.2 4.1-1.4 4.1-3.1 4.1-3.5 4.2-4.3 4.3-4.5 4.4-4.2 4.4-3.7 4.4-1.9 4.4-1.5 4.5-0.6 4.4-0.1 4.4 0.2 4.4 0.1 4.4 0.3 4.4 0.3 4.4 0.2 4.4 0.2 4.3 0.2 4.2 0.3 4.2 0.3 4 0.2 4 0.3 4 0.3 4 0.2 4 0.2 4 0.2 4 0.2 4 0.2 4 0.2 4 0.2 4 0.1 4 0.2 4 0.2 4 0.3 4 0.3 4 0.3 4 0.2 4 0.2 4 0 4 0.1 4-0.1M119.2 138.9l4 0 4 0 4 0.1 4 0.1 4 0.1 4 0.2 4 0.3 4 0.3 4 0.5 4 0.5 4 0.9 4 1 4 1.4 4 1.8 3.9 2.2 4 2.9 4 3.5 4 4.4 3.9 5.7 4 7.5 3.9 10.2 4 10.9 3.8 11.2 3.9 11.4 3.9 10.9 3.9 11.2 3.9 13.6 3.9 16.2 4 17.1 4 17.1 4 18.5 4 16.7 4 11 4 6.2 4.1 5.7 4 4.6 4 3.7 4.1 2.2 4-1.3 4-3.3 4.1-3.5 4.1-4.4 4.1-4.5 4.3-4.3 4.2-4.1 4.2-2.9 4.2-2.3 4.2-0.9 4.3-0.2 4.2 0.2 4.2 0.3 4.2 0.4 4.2 0.4 4.2 0.4 4.2 0.3 4.2 0.4 4.1 0.3 4.1 0.5 4 0.4 4 0.4 4 0.4 4 0.4 4 0.3 4 0.3 4 0.3 4 0.3 4 0.3 4 0.2 4 0.3 4 0.2 4 0.3 4 0.4 4 0.3 4 0.3 4 0.2 4 0.1 4 0.1 4 0 4 0M135.4 138.8l4 0 4 0.1 4 0 4 0.1 4 0.2 4 0.1 4 0.3 4 0.4 4 0.4 4 0.6 4 0.8 4 1 4.1 1.4 4 1.8 4.1 2.3 4.1 2.8 4.1 3.6 4.1 4.3 4.2 5.8 4.1 7.5 4.2 10.2 4.3 10.9 4.5 11.1 4.5 11.4 4.6 10.9 4.4 11.2 4.2 13.7 4.3 16.1 4.1 17.1 4 17.1 4 18.6 3.9 16.6 4 11 3.9 6.8 3.9 6.1 3.9 4.9 3.9 3.9 3.9 2.3 3.8-1.4 3.8-3.4 3.9-3.8 3.6-4.6 3.4-4.9 3.1-4.5 3.1-4.4 3.2-2.9 3.2-2.4 3.1-0.9 3.1-0.2 3.2 0.2 3.1 0.3 3.3 0.4 3.2 0.4 3.2 0.4 3.2 0.3 3.4 0.4 3.5 0.4 3.7 0.4 3.9 0.4 4 0.5 4 0.4 4 0.3 4 0.4 4 0.3 4 0.3 4 0.3 4 0.3 4 0.3 4 0.2 4 0.3 4 0.3 4 0.3 4 0.4 4 0.3 4 0.2 4 0.2 4 0.1 4 0 4 0M136.5 139.6l4 0 4 0.1 4 0 4 0.1 4 0.2 4 0.1 4 0.3 4 0.4 4 0.4 4 0.6 4 0.8 4 1 4 1.4 4.1 1.8 4.1 2.3 4.1 2.8 4.1 3.6 4.1 4.3 4.2 5.8 4.2 7.5 4.2 10.2 4.3 10.9 4.5 11.1 4.6 11.4 4.6 10.9 4.4 11.2 4.3 13.7 4.3 16.1 4.1 17.1 4 17.1 4 18.6 3.9 16.6 4 11 3.9 6.6 3.9 5.9 3.9 4.7 3.9 3.8 3.8 2.3 3.9-1.4 3.8-3.4 3.8-3.6 3.6-4.5 3.3-4.7 3.1-4.4 3-5 3.1-5 3.1-4.1 3.1-1.6 3-0.3 3.1 0.4 3.1 0.5 3.2 0.7 3.1 0.6 3.2 0.7 3.1 0.6 3.3 0.6 3.5 0.7 3.6 0.7 4 0.8 4 0.7 4 0.7 4 0.6 4 0.6 4 0.6 4 0.5 4 0.5 4 0.5 4 0.4 4 0.5 4 0.4 4 0.5 4 0.3 4 0.3 4 0.3 4 0.3 4 0.1 4 0.1 4 0 4 0"/>
<path id="f1mid" d="M120.8 138.7l4 0 4 0 4 0.1 4 0.1 4 0.1 4 0.2 4 0.3 4 0.3 4 0.5 4 0.6 4 0.8 4 1 4 1.4 4 1.8 4 2.3 4 2.8 4 3.5 3.9 4.4 4 5.7 4 7.5 4 10.2 3.9 10.9 4 11.2 3.9 11.4 3.9 10.9 4 11.2 3.9 13.6 4 16.2 4 17.1 4 17.1 4 18.5 4 16.7 4 11 4 7.1 4 6.3 4.1 5.1 4 4.1 4 2.4 4-1.5 4-3.5 4-4 4.1-4.8 4.1-5 4.1-4.7 4.1-5.2 4.1-4.8 4.1-3.9 4.1-1.5 4.2-0.2 4.1 0.3 4.1 0.5 4.1 0.6 4.1 0.7 4.1 0.6 4.1 0.6 4.1 0.6 4 0.6 4.1 0.7 4 0.7 4 0.7 4 0.7 4 0.6 4 0.5 4 0.6 4 0.5 4 0.5 4 0.4 4 0.5 4 0.4 4 0.4 4 0.4 4 0.4 4 0.4 4 0.3 4 0.2 4 0.2 4 0.1 4 0 4 0M122.5 139.6l4 0 4 0 4 0.1 4 0.1 4 0.1 4 0.2 4 0.2 4 0.4 4 0.5 4 0.5 4 0.9 4 1 4 1.4 4 1.8 4 2.2 4 2.8 4 3.6 4 4.4 4 5.7 4 7.5 4 10.2 4 10.9 4 11.2 4 11.4 4 10.9 4 11.2 4 13.6 4 16.2 4 17.1 4 17 4 18.6 4 16.7 4 10.9 4 7 4 6.1 4 5 4 4 4 2.3 4-1.4 4-3.5 4-3.8 4-4.7 4-4.9 4-4.6 4-5 4-4.6 4-3.8 4-1.4 4-0.3 4 0.3 4 0.5 4 0.6 4 0.6 4 0.6 4 0.6 4 0.6 4 0.6 4 0.7 4 0.6 4 0.7 4 0.6 4 0.6 4 0.6 4 0.5 4 0.5 4 0.4 4 0.5 4 0.4 4 0.4 4 0.4 4 0.4 4 0.4 4 0.3 4 0.3 4 0.3 4 0.1 4 0.1 4 0 4 0M124.2 139.3l4 0 4 0.1 4 0 4 0.1 4 0.2 4 0.1 4 0.3 4 0.4 4 0.4 4 0.6 4 0.8 4 1 4 1.4 4 1.8 4 2.3 4 2.8 4.1 3.6 4 4.3 4 5.8 4 7.5 4 10.2 4.1 10.9 4 11.1 4.1 11.4 4.1 10.9 4 11.2 4.1 13.7 4 16.1 4 17.1 4 17.1 4 18.6 4 16.6 4 11 4 6.8 4 6.1 4 4.8 4 4 3.9 2.3 4-1.4 4-3.4 4-3.8 3.9-4.6 3.9-4.9 3.9-4.5 3.9-4.6 3.9-3.6 3.9-2.8 3.9-1.1 3.9-0.3 3.8 0.3 3.9 0.4 3.9 0.4 3.9 0.5 3.9 0.5 3.9 0.4 3.9 0.4 4 0.5 3.9 0.5 4 0.6 4 0.5 4 0.5 4 0.4 4 0.4 4 0.4 4 0.4 4 0.4 4 0.3 4 0.3 4 0.3 4 0.3 4 0.4 4 0.3 4 0.4 4 0.3 4 0.2 4 0.2 4 0.1 4 0 4 0M125.8 139.4l4 0 4 0 4 0.1 4 0.1 4 0.1 4 0.2 4 0.2 4 0.4 4 0.4 4 0.6 4 0.8 4 1.1 4 1.3 4 1.9 4.1 2.2 4 2.8 4 3.6 4 4.3 4.1 5.8 4 7.5 4.1 10.2 4 10.9 4.2 11.2 4.1 11.3 4.1 11 4.1 11.2 4.1 13.6 4.1 16.2 4 17.1 4 17 4 18.6 4 16.7 4 10.9 4 6.9 3.9 6.1 4 4.8 4 4 3.9 2.3 4-1.4 4-3.4 3.9-3.8 3.9-4.6 3.9-4.9 3.7-4.6 3.8-4.7 3.8-3.9 3.8-3.2 3.8-1.3 3.7-0.2 3.8 0.3 3.8 0.4 3.8 0.5 3.8 0.5 3.8 0.6 3.8 0.4 3.8 0.5 3.9 0.5 3.9 0.6 4 0.6 4 0.6 4 0.5 4 0.5 4 0.5 4 0.4 4 0.4 4 0.4 4 0.4 4 0.4 4 0.3 4 0.3 4 0.4 4 0.4 4 0.3 4 0.3 4 0.2 4 0.2 4 0.1 4 0 4 0M134.4 139.8l4 0 4 0 4 0.1 4 0.1 4 0.1 4 0.2 4 0.2 4 0.4 4 0.5 4 0.5 4 0.9 4 1 4 1.4 4.1 1.8 4.1 2.2 4 2.8 4.1 3.6 4.2 4.4 4.1 5.7 4.1 7.5 4.2 10.2 4.3 10.9 4.4 11.2 4.5 11.3 4.5 11 4.4 11.2 4.2 13.6 4.2 16.2 4.2 17.1 4 17 3.9 18.6 4 16.7 4 10.9 3.9 7.1 3.9 6.2 3.9 5 3.9 4.1 3.9 2.3 3.8-1.4 3.9-3.6 3.8-3.8 3.7-4.8 3.4-4.9 3.2-4.7 3.2-5 3.3-4.5 3.2-3.7 3.2-1.3 3.2-0.3 3.2 0.3 3.2 0.5 3.3 0.6 3.3 0.6 3.3 0.6 3.3 0.5 3.3 0.5 3.6 0.7 3.7 0.6 4 0.7 4 0.6 4 0.6 4 0.6 4 0.5 4 0.5 4 0.5 4 0.5 4 0.4 4 0.4 4 0.4 4 0.4 4 0.4 4 0.4 4 0.3 4 0.3 4 0.3 4 0.2 4 0 4 0 4 0"/>
<path id="f1hi" d="M127.2 139.9l4 0 4 0 4 0.1 4 0.1 4 0.1 4 0.2 4 0.3 4 0.3 4 0.5 4 0.5 4 0.9 4 1 4.1 1.4 4 1.8 4 2.2 4 2.9 4.1 3.5 4 4.4 4.1 5.7 4 7.5 4.1 10.2 4.1 10.9 4.2 11.2 4.2 11.4 4.2 10.9 4.1 11.2 4.1 13.6 4.1 16.2 4.1 17.1 4 17.1 3.9 18.5 4 16.7 4 11 4 5.2 4 4.9 3.9 4 4 3.2 3.9 1.9 4-1.2 3.9-2.8 3.9-3 3.9-3.8 3.8-4 3.7-3.7 3.6-3.9 3.7-3.5 3.7-2.8 3.7-1.1 3.7-0.2 3.7 0.3 3.7 0.3 3.7 0.5 3.7 0.5 3.7 0.4 3.7 0.4 3.8 0.4 3.8 0.5 3.9 0.5 4 0.5 4 0.5 4 0.5 4 0.4 4 0.4 4 0.4 4 0.4 4 0.4 4 0.3 4 0.3 4 0.3 4 0.3 4 0.3 4 0.3 4 0.3 4 0.2 4 0.2 4 0.2 4 0 4 0 4 0M128.4 139.6l4 0 4 0.1 4 0 4 0.1 4 0.2 4 0.1 4 0.3 4 0.4 4 0.4 4 0.6 4 0.8 4.1 1 4 1.4 4 1.8 4 2.3 4.1 2.8 4 3.6 4.1 4.3 4 5.7 4.1 7.6 4.1 10.2 4.1 10.9 4.3 11.1 4.2 11.4 4.3 10.9 4.1 11.2 4.2 13.6 4.1 16.2 4 17.1 4 17.1 4 18.6 4 16.6 4 11 3.9 5.1 4 5 4 3.9 3.9 3.2 3.9 1.9 4-1.1 3.9-2.8 3.9-3.1 3.8-3.7 3.7-4 3.7-3.7 3.6-4.4 3.6-5 3.6-4 3.6-1.5 3.6-0.4 3.6 0.4 3.6 0.5 3.7 0.7 3.6 0.6 3.6 0.7 3.7 0.6 3.7 0.6 3.7 0.7 3.9 0.7 4 0.7 4 0.7 4 0.7 4 0.7 4 0.5 4 0.6 4 0.5 4 0.5 4 0.5 4 0.5 4 0.4 4 0.4 4 0.4 4 0.3 4 0.3 4 0.3 4 0.2 4 0.1 4 0.1 4 0 4 0M131.2 139.1l4 0 4 0.1 4 0.1 4 0.1 4 0.1 4 0.2 4 0.2 4 0.4 4 0.4 4 0.6 4 0.8 4 1.1 4 1.3 4.1 1.9 4 2.2 4.1 2.8 4 3.6 4.1 4.3 4.1 5.8 4.1 7.5 4.1 10.2 4.2 10.9 4.4 11.1 4.4 11.4 4.3 10.9 4.3 11.2 4.1 13.7 4.2 16.1 4.1 17.2 4 17 4 18.6 4 16.6 3.9 11 4 6.2 3.9 5.6 3.9 4.5 4 3.6 3.9 2.1 3.9-1.3 3.9-3.1 3.8-3.5 3.8-4.3 3.6-4.5 3.4-4.2 3.4-4.3 3.4-3.6 3.5-2.9 3.4-1.1 3.4-0.2 3.4 0.3 3.5 0.3 3.5 0.5 3.5 0.5 3.4 0.5 3.5 0.4 3.5 0.4 3.7 0.5 3.8 0.5 4 0.6 4 0.5 4 0.5 4 0.4 4 0.4 4 0.4 4 0.4 4 0.4 4 0.3 4 0.3 4 0.3 4 0.4 4 0.3 4 0.3 4 0.3 4 0.3 4 0.2 4 0.2 4 0.1 4 0 4 0"/>
<path id="f1top" d="M130.3 138.8l4 0 4 0.1 4 0 4 0.2 4 0.1 4 0.1 4 0.3 4 0.4 4 0.4 4 0.6 4 0.8 4 1 4 1.4 4.1 1.8 4 2.3 4.1 2.8 4 3.6 4.1 4.3 4.1 5.8 4.1 7.5 4.1 10.2 4.2 10.9 4.3 11.1 4.3 11.4 4.3 10.9 4.2 11.2 4.2 13.7 4.1 16.1 4.1 17.1 4 17.1 4 18.6 4 16.6 4 11 3.9 5.5 4 5.2 3.9 4.2 3.9 3.3 3.9 2 4-1.2 3.9-2.9 3.8-3.2 3.8-4 3.6-4.1 3.5-3.9 3.5-4.2 3.5-3.7 3.5-3.1 3.5-1.2 3.4-0.2 3.5 0.3 3.5 0.4 3.6 0.5 3.5 0.5 3.5 0.5 3.6 0.4 3.6 0.5 3.6 0.5 3.9 0.5 3.9 0.6 4 0.5 4 0.5 4 0.5 4 0.5 4 0.4 4 0.4 4 0.4 4 0.3 4 0.4 4 0.3 4 0.3 4 0.4 4 0.3 4 0.3 4 0.2 4 0.2 4 0.2 4 0 4 0 4 0M132.1 139.3l4 0 4 0 4 0.1 4 0.1 4 0.1 4 0.2 4 0.2 4 0.4 4 0.4 4 0.6 4 0.8 4 1.1 4 1.3 4.1 1.9 4 2.2 4.1 2.8 4.1 3.6 4.1 4.3 4.1 5.8 4.1 7.5 4.1 10.2 4.3 10.9 4.3 11.2 4.4 11.3 4.4 10.9 4.3 11.3 4.2 13.6 4.2 16.2 4.1 17.1 4 17 4 18.6 3.9 16.7 4 10.9 3.9 5.3 4 5.1 3.9 4 3.9 3.3 3.9 1.9 3.9-1.2 3.9-2.8 3.8-3.1 3.8-3.9 3.5-4 3.4-3.8 3.3-4.2 3.4-4 3.4-3.3 3.4-1.3 3.3-0.2 3.3 0.3 3.4 0.4 3.5 0.5 3.4 0.6 3.4 0.5 3.4 0.5 3.5 0.5 3.6 0.5 3.8 0.6 4 0.6 4 0.6 4 0.6 4 0.5 4 0.5 4 0.4 4 0.5 4 0.4 4 0.4 4 0.3 4 0.4 4 0.3 4 0.4 4 0.3 4 0.3 4 0.2 4 0.2 4 0.2 4 0 4 0 4 0"/>
<path id="f1tl" d="M288.5 346l4.9-2.9 4.9-2.4 4.9-1 5-0.1 4.9 0.2 4.9 0.3 4.8 0.4 4.9 0.4 4.8 0.4 4.9 0.3 4.7 0.4 4.5 0.4 4.4 0.4 4 0.4 4 0.5 4 0.4 4 0.3 4 0.4 4 0.3 4 0.3 4 0.3 4 0.3 4 0.3 4 0.2 4 0.3 4 0.3 4 0.2 4 0.1 4 0.2 4 0.1 4 0.1M291.1 346.3l4.7-3.3 4.7-2.7 4.8-1 4.8-0.2 4.8 0.2 4.7 0.4 4.6 0.4 4.7 0.5 4.7 0.4 4.7 0.4 4.6 0.4 4.5 0.5 4.2 0.4 4 0.5 4 0.5 4 0.5 4 0.4 4 0.4 4 0.4 4 0.3 4 0.4 4 0.3 4 0.3 4 0.3 4 0.2 4 0.3 4 0.3 4 0.2 4 0.2 4 0.2 4 0.1M293.4 345.7l4.6-2.9 4.6-2.4 4.6-0.9 4.6-0.2 4.6 0.3 4.6 0.3 4.5 0.3 4.6 0.4 4.5 0.4 4.6 0.4 4.4 0.3 4.4 0.4 4.2 0.5 4 0.4 4 0.4 4 0.4 4 0.4 4 0.3 4 0.4 4 0.3 4 0.3 4 0.3 4 0.2 4 0.3 4 0.2 4 0.3 4 0.3 4 0.2 4 0.3 4 0.2 4 0.1M296.1 346.4l4.4-1.9 4.4-1.5 4.5-0.6 4.4-0.1 4.4 0.2 4.4 0.1 4.4 0.3 4.4 0.3 4.4 0.2 4.4 0.2 4.3 0.2 4.2 0.3 4.2 0.3 4 0.2 4 0.3 4 0.3 4 0.2 4 0.2 4 0.2 4 0.2 4 0.2 4 0.2 4 0.2 4 0.1 4 0.2 4 0.2 4 0.3 4 0.3 4 0.3 4 0.2 4 0.2M299.2 345.3l4.2-2.9 4.2-2.3 4.2-0.9 4.3-0.2 4.2 0.2 4.2 0.3 4.2 0.4 4.2 0.4 4.2 0.4 4.2 0.3 4.2 0.4 4.1 0.3 4.1 0.5 4 0.4 4 0.4 4 0.4 4 0.4 4 0.3 4 0.3 4 0.3 4 0.3 4 0.3 4 0.2 4 0.3 4 0.2 4 0.3 4 0.4 4 0.3 4 0.3 4 0.2 4 0.1M264.4 366.6l4 4.1 4 2.4 4-1.5 4-3.5 4-4 4.1-4.8 4.1-5 4.1-4.7 4.1-5.2 4.1-4.8 4.1-3.9 4.1-1.5 4.2-0.2 4.1 0.3 4.1 0.5 4.1 0.6 4.1 0.7 4.1 0.6 4.1 0.6 4.1 0.6 4 0.6 4.1 0.7 4 0.7 4 0.7 4 0.7 4 0.6 4 0.5 4 0.6 4 0.5 4 0.5 4 0.4 4 0.5 4 0.4 4 0.4 4 0.4 4 0.4 4 0.4 4 0.3 4 0.2 4 0.2M266.5 367l4 4 4 2.3 4-1.4 4-3.5 4-3.8 4-4.7 4-4.9 4-4.6 4-5 4-4.6 4-3.8 4-1.4 4-0.3 4 0.3 4 0.5 4 0.6 4 0.6 4 0.6 4 0.6 4 0.6 4 0.6 4 0.7 4 0.6 4 0.7 4 0.6 4 0.6 4 0.6 4 0.5 4 0.5 4 0.4 4 0.5 4 0.4 4 0.4 4 0.4 4 0.4 4 0.4 4 0.3 4 0.3 4 0.3 4 0.1M268.7 366.4l4 4 3.9 2.3 4-1.4 4-3.4 4-3.8 3.9-4.6 3.9-4.9 3.9-4.5 3.9-4.6 3.9-3.6 3.9-2.8 3.9-1.1 3.9-0.3 3.8 0.3 3.9 0.4 3.9 0.4 3.9 0.5 3.9 0.5 3.9 0.4 3.9 0.4 4 0.5 3.9 0.5 4 0.6 4 0.5 4 0.5 4 0.4 4 0.4 4 0.4 4 0.4 4 0.4 4 0.3 4 0.3 4 0.3 4 0.3 4 0.4 4 0.3 4 0.4 4 0.3 4 0.2 4 0.2M270.7 366.5l4 4 3.9 2.3 4-1.4 4-3.4 3.9-3.8 3.9-4.6 3.9-4.9 3.7-4.6 3.8-4.7 3.8-3.9 3.8-3.2 3.8-1.3 3.7-0.2 3.8 0.3 3.8 0.4 3.8 0.5 3.8 0.5 3.8 0.6 3.8 0.4 3.8 0.5 3.9 0.5 3.9 0.6 4 0.6 4 0.6 4 0.5 4 0.5 4 0.5 4 0.4 4 0.4 4 0.4 4 0.4 4 0.4 4 0.3 4 0.3 4 0.4 4 0.4 4 0.3 4 0.3 4 0.2 4 0.2M281.6 367.4l3.9 4.1 3.9 2.3 3.8-1.4 3.9-3.6 3.8-3.8 3.7-4.8 3.4-4.9 3.2-4.7 3.2-5 3.3-4.5 3.2-3.7 3.2-1.3 3.2-0.3 3.2 0.3 3.2 0.5 3.3 0.6 3.3 0.6 3.3 0.6 3.3 0.5 3.3 0.5 3.6 0.7 3.7 0.6 4 0.7 4 0.6 4 0.6 4 0.6 4 0.5 4 0.5 4 0.5 4 0.5 4 0.4 4 0.4 4 0.4 4 0.4 4 0.4 4 0.4 4 0.3 4 0.3 4 0.3 4 0.2M315.4 345.2l3.2-2.9 3.2-2.4 3.1-0.9 3.1-0.2 3.2 0.2 3.1 0.3 3.3 0.4 3.2 0.4 3.2 0.4 3.2 0.3 3.4 0.4 3.5 0.4 3.7 0.4 3.9 0.4 4 0.5 4 0.4 4 0.3 4 0.4 4 0.3 4 0.3 4 0.3 4 0.3 4 0.3 4 0.2 4 0.3 4 0.3 4 0.3 4 0.4 4 0.3 4 0.2 4 0.2M316.5 345.3l3.1-5 3.1-4.1 3.1-1.6 3-0.3 3.1 0.4 3.1 0.5 3.2 0.7 3.1 0.6 3.2 0.7 3.1 0.6 3.3 0.6 3.5 0.7 3.6 0.7 4 0.8 4 0.7 4 0.7 4 0.6 4 0.6 4 0.6 4 0.5 4 0.5 4 0.5 4 0.4 4 0.5 4 0.4 4 0.5 4 0.3 4 0.3 4 0.3 4 0.3 4 0.1"/>
<path id="f1th" d="M272.5 363.4l4 3.2 3.9 1.9 4-1.2 3.9-2.8 3.9-3 3.9-3.8 3.8-4 3.7-3.7 3.6-3.9 3.7-3.5 3.7-2.8 3.7-1.1 3.7-0.2 3.7 0.3 3.7 0.3 3.7 0.5 3.7 0.5 3.7 0.4 3.7 0.4 3.8 0.4 3.8 0.5 3.9 0.5 4 0.5 4 0.5 4 0.5 4 0.4 4 0.4 4 0.4 4 0.4 4 0.4 4 0.3 4 0.3 4 0.3 4 0.3 4 0.3 4 0.3 4 0.3 4 0.2 4 0.2 4 0.2M274.1 363l3.9 3.2 3.9 1.9 4-1.1 3.9-2.8 3.9-3.1 3.8-3.7 3.7-4 3.7-3.7 3.6-4.4 3.6-5 3.6-4 3.6-1.5 3.6-0.4 3.6 0.4 3.6 0.5 3.7 0.7 3.6 0.6 3.6 0.7 3.7 0.6 3.7 0.6 3.7 0.7 3.9 0.7 4 0.7 4 0.7 4 0.7 4 0.7 4 0.5 4 0.6 4 0.5 4 0.5 4 0.5 4 0.5 4 0.4 4 0.4 4 0.4 4 0.3 4 0.3 4 0.3 4 0.2 4 0.1M276.4 363.1l3.9 3.3 3.9 2 4-1.2 3.9-2.9 3.8-3.2 3.8-4 3.6-4.1 3.5-3.9 3.5-4.2 3.5-3.7 3.5-3.1 3.5-1.2 3.4-0.2 3.5 0.3 3.5 0.4 3.6 0.5 3.5 0.5 3.5 0.5 3.6 0.4 3.6 0.5 3.6 0.5 3.9 0.5 3.9 0.6 4 0.5 4 0.5 4 0.5 4 0.5 4 0.4 4 0.4 4 0.4 4 0.3 4 0.4 4 0.3 4 0.3 4 0.4 4 0.3 4 0.3 4 0.2 4 0.2 4 0.2M277.5 364.8l4 3.6 3.9 2.1 3.9-1.3 3.9-3.1 3.8-3.5 3.8-4.3 3.6-4.5 3.4-4.2 3.4-4.3 3.4-3.6 3.5-2.9 3.4-1.1 3.4-0.2 3.4 0.3 3.5 0.3 3.5 0.5 3.5 0.5 3.4 0.5 3.5 0.4 3.5 0.4 3.7 0.5 3.8 0.5 4 0.6 4 0.5 4 0.5 4 0.4 4 0.4 4 0.4 4 0.4 4 0.4 4 0.3 4 0.3 4 0.3 4 0.4 4 0.3 4 0.3 4 0.3 4 0.3 4 0.2 4 0.2M278.7 363l3.9 3.3 3.9 1.9 3.9-1.2 3.9-2.8 3.8-3.1 3.8-3.9 3.5-4 3.4-3.8 3.3-4.2 3.4-4 3.4-3.3 3.4-1.3 3.3-0.2 3.3 0.3 3.4 0.4 3.5 0.5 3.4 0.6 3.4 0.5 3.4 0.5 3.5 0.5 3.6 0.5 3.8 0.6 4 0.6 4 0.6 4 0.6 4 0.5 4 0.5 4 0.4 4 0.5 4 0.4 4 0.4 4 0.3 4 0.4 4 0.3 4 0.4 4 0.3 4 0.3 4 0.2 4 0.2 4 0.2"/>
<path id="f1red" d="M157.1 139.9l4 0.3 4 0.3 4 0.5 4 0.6 4 0.8 4 1 4.1 1.4 4 1.8 4.1 2.3 4.1 2.8 4.1 3.5M276.1 355.8l3.9 2.9 3.9 2.4 3.9 1.4 3.9-0.9 3.9-2.1 3.8-2.2"/>
<path id="f1rt" d="M321.5 338.5l3.2-0.7 3.3 0.1 3.3 0.3 3.3 0.4 3.4 0.5 3.4 0.5 3.3 0.4 3.4 0.4 3.5 0.5 3.7 0.5 3.9 0.5 4 0.6 4 0.5 4 0.4 4 0.5 4 0.4 4 0.4 4 0.4 4 0.3 4 0.3 4 0.3 4 0.3 4 0.4 4 0.2 4 0.2 4 0.2 4 0.2 4 0.1 4 0.1 4 0 4 0"/>
<path id="f1org" d="M133.1 139.4l4 0 4 0 4 0.1 4 0.1 4 0.2 4 0.1 4 0.3 4 0.3 4 0.5 4 0.6 4 0.8 4 1 4.1 1.4 4 1.8 4.1 2.3 4.1 2.8 4.1 3.5 4.1 4.4 4.1 5.7 4.1 7.5 4.1 10.2 4.3 11 4.4 11.1 4.5 11.4 4.4 10.9 4.3 11.2 4.2 13.6 4.2 16.2 4.1 17.1 4 17.1 4 18.5 4 16.7 3.9 11 4 3.3 3.9 3.7 3.9 2.9 3.9 2.4 3.9 1.4 3.9-0.9 3.9-2.1 3.8-2.2 3.7-2.8 3.5-2.9 3.3-2.8 3.3-3.3 3.3-3.5 3.3-2.9 3.3-1.1 3.2-0.2 3.3 0.2 3.3 0.4 3.4 0.5 3.4 0.4 3.3 0.5 3.4 0.4 3.5 0.5 3.5 0.5 3.8 0.5 4 0.5 4 0.5 4 0.5 4 0.5 4 0.4 4 0.4 4 0.4 4 0.3 4 0.4 4 0.3 4 0.3 4 0.3 4 0.3 4 0.2 4 0.2 4 0.2 4 0.2 4 0.1 4 0 4 0 4 0"/>
<path id="r2lo" d="M741.5 346.8l4-0.1 4 0 4-0.1 4-0.2 4-0.1 4-0.2 4-0.4 4-0.4 4-0.5 4-0.7 4-0.9 4-1.2 4-1.7 3.9-2 3.9-2.5 3.9-3.2 3.9-3.9 3.9-4.9 3.8-6.4 3.8-8.7 3.8-10.6 3.7-10.7 3.5-11.1 3.4-11.1 3.4-10.5 3.6-11.6 3.7-14.4 3.7-16.3 3.9-16.7 4-17.1 4-18.1 4.1-15.2 4-9.6 4.1-3.1 4.1-4 4.1-3.1 4.1-2.6 4.2-1.3 4.1 1.1 4.2 2.3 4.2 2.5 4.4 3.2 4.7 3.3 4.9 2.7 5 2.6 4.9 2.2 4.9 1.8 4.9 1.5 5 0.9 4.9 0.6 4.9 0.3 4.8 0.1 4.9-0.5 4.8-0.8 4.9-0.9 4.7-0.8 4.5-1 4.4-0.8 4-0.7 4-0.7 4-0.6 4-0.6 4-0.5 4-0.4 4-0.1 4 0 4 0 4 0.1 4 0 4 0 4 0.1 4 0.1 4 0.2 4 0.2 4 0.1 4 0.2 4 0.1 4 0 4 0M743.9 346.3l4 0 4-0.1 4 0 4-0.2 4-0.1 4-0.2 4-0.4 4-0.4 4-0.5 4-0.7 4-1 4-1.1 4-1.7 4-2 3.9-2.5 3.9-3.2 3.9-3.9 3.9-4.9 3.9-6.4 3.8-8.7 3.9-10.6 3.7-10.7 3.6-11.1 3.5-11.1 3.5-10.5 3.7-11.7 3.7-14.3 3.8-16.3 3.9-16.7 4-17.1 4-18.1 4-15.2 4.1-9.6 4-3.7 4.1-4.3 4.1-3.4 4.1-2.8 4.1-1.5 4.2 1.2 4.1 2.5 4.2 2.7 4.3 3.5 4.6 3.6 4.7 3 4.8 2.8 4.8 1.5 4.7 1.2 4.8 1 4.8 0.7 4.8 0.3 4.7 0.3 4.7 0 4.6-0.3 4.8-0.6 4.7-0.5 4.6-0.6 4.4-0.6 4.3-0.6 4-0.5 4-0.5 4-0.4 4-0.4 4-0.6 4-0.4 4-0.1 4 0 4 0 4 0.1 4 0 4 0 4 0.1 4 0.1 4 0.2 4 0.2 4 0.2 4 0.2 4 0 4 0 4 0M748.9 347.2l4 0 4-0.1 4-0.1 4-0.1 4-0.1 4-0.2 4-0.4 4-0.4 4-0.5 4-0.7 4-1 4-1.1 4-1.7 3.9-2 4-2.5 3.9-3.2 4-3.9 3.9-4.9 3.9-6.4 4-8.7 3.9-10.7 3.8-10.6 3.8-11.1 3.7-11.1 3.7-10.5 3.8-11.7 3.9-14.3 3.9-16.3 3.9-16.7 4-17.1 4-18.1 4-15.2 4.1-9.6 4-6.2 4-5.7 4.1-4.5 4.1-3.7 4-2 4.1 1.6 4.1 3.3 4.1 3.7 4.2 4.6 4.3 4.7 4.4 4 4.5 3.7 4.4 2.3 4.4 1.8 4.5 1.6 4.4 1 4.5 0.5 4.4 0.4 4.4 0 4.4-0.5 4.4-0.8 4.4-0.9 4.3-0.9 4.3-0.9 4.1-0.9 4-0.7 4-0.7 4-0.6 4-0.6 4-0.8 4-0.5 4-0.2 4 0 4 0 4 0.1 4 0 4 0.1 4 0 4 0.2 4 0.3 4 0.2 4 0.3 4 0.2 4 0.1 4 0 4 0M768.1 347l4 0 4-0.1 4-0.1 4-0.1 4-0.2 4-0.2 4-0.3 4-0.4 4-0.5 4-0.8 4-0.9 4-1.2 4-1.6 4.1-2.1 4.1-2.5 4.1-3.1 4.1-3.9 4.1-4.9 4.1-6.5 4.2-8.7 4.1-10.6 4.3-10.7 4.5-11.1 4.6-11 4.5-10.6 4.4-11.6 4.2-14.4 4.3-16.3 4.1-16.7 4-17 4-18.1 3.9-15.2 4-9.6 3.9-8 3.9-6.7 3.9-5.3 3.9-4.5 3.9-2.3 3.8 1.9 3.9 3.9 3.8 4.3 3.6 5.4 3.4 5.7 3.2 4.7 3.1 4.3 3.2 2.7 3.2 2.1 3.2 1.7 3.1 1.1 3.1 0.6 3.2 0.5 3.3 0 3.3-0.5 3.2-1 3.2-1 3.4-1 3.5-1.1 3.7-0.9 4-0.9 4-0.8 4-0.6 4-0.7 4-1 4-0.6 4-0.2 4 0 4 0 4 0.1 4 0 4 0.1 4 0.1 4 0.2 4 0.3 4 0.3 4 0.3 4 0.3 4 0.1 4 0M769.5 347.2l4 0 4-0.1 4-0.1 4-0.1 4-0.2 4-0.2 4-0.3 4-0.4 4-0.5 4-0.8 4-0.9 4-1.2 4-1.6 4.1-2.1 4.1-2.5 4.1-3.1 4.1-3.9 4.1-4.9 4.2-6.4 4.2-8.7 4.2-10.7 4.3-10.7 4.5-11.1 4.6-11 4.6-10.6 4.4-11.6 4.3-14.4 4.3-16.3 4.1-16.7 4-17 4-18.1 3.9-15.2 4-9.6 3.9-6.9 3.9-6.2 3.9-4.8 3.9-4 3.8-2.1 3.9 1.6 3.8 3.7 3.8 3.8 3.6 5 3.3 5.1 3.1 4.3 3 4 3.1 3.7 3.1 3 3.1 2.6 3 1.6 3.1 0.9 3.1 0.6 3.2 0.1 3.1-0.8 3.2-1.4 3.1-1.4 3.3-1.5 3.5-1.6 3.6-1.4 4-1.2 4-1.2 4-0.9 4-1 4-0.9 4-0.6 4-0.1 4 0 4 0 4 0 4 0.1 4 0 4 0.1 4 0.2 4 0.3 4 0.3 4 0.3 4 0.2 4 0.1 4 0"/>
<path id="r2mid" d="M746.7 346.7l4-0.1 4 0 4-0.1 4-0.2 4-0.1 4-0.2 4-0.3 4-0.5 4-0.5 4-0.7 4-0.9 4-1.2 4-1.7 3.9-2 4-2.5 3.9-3.2 3.9-3.9 4-4.9 3.9-6.4 3.9-8.7 3.8-10.6 3.8-10.7 3.7-11.1 3.6-11.1 3.7-10.5 3.7-11.6 3.8-14.4 3.9-16.3 3.9-16.7 4-17.1 4-18 4-15.3 4-9.6 4.1-5.2 4.1-5.1 4-4 4.1-3.4 4.1-1.8 4.1 1.4 4.1 3.1 4.1 3.2 4.3 4.1 4.4 4.3 4.6 3.7 4.6 3.3 4.6 2.1 4.5 1.7 4.6 1.5 4.6 0.9 4.6 0.5 4.6 0.4 4.5 0 4.5-0.4 4.5-0.9 4.6-0.7 4.4-0.9 4.4-0.9 4.2-0.8 4-0.7 4-0.6 4-0.6 4-0.6 4-0.7 4-0.5 4-0.1 4 0 4 0 4 0.1 4 0 4 0 4 0.1 4 0.2 4 0.2 4 0.2 4 0.3 4 0.2 4 0.1 4 0 4 0M752 347.6l4 0 4-0.1 4-0.1 4-0.1 4-0.1 4-0.3 4-0.3 4-0.4 4-0.5 4-0.8 4-0.9 4-1.2 4-1.6 4-2.1 3.9-2.4 4-3.2 4-3.9 3.9-4.9 4-6.4 4-8.7 3.9-10.7 3.9-10.7 3.9-11.1 3.8-11 3.9-10.6 3.9-11.6 3.9-14.4 4-16.2 3.9-16.8 4-17 4-18.1 4-15.2 4.1-9.6 4-7.2 4-6.3 4-4.9 4.1-4.2 4-2.1 4 1.7 4.1 3.7 4 4 4.1 5.1 4.2 5.2 4.2 4.4 4.3 4.1 4.2 2 4.2 1.5 4.3 1.3 4.2 0.9 4.2 0.4 4.3 0.3 4.2 0.1 4.2-0.4 4.2-0.8 4.2-0.7 4.2-0.7 4.1-0.8 4.1-0.8 4-0.6 4-0.6 4-0.5 4-0.5 4-0.9 4-0.6 4-0.2 4 0 4 0.1 4 0 4 0.1 4 0 4 0.1 4 0.2 4 0.3 4 0.3 4 0.3 4 0.2 4 0.1 4 0 4 0M754 346.5l4-0.1 4 0 4-0.1 4-0.1 4-0.2 4-0.2 4-0.3 4-0.5 4-0.5 4-0.7 4-0.9 4-1.2 3.9-1.6 4-2.1 4-2.5 4-3.2 4-3.9 4-4.9 4-6.4 4-8.7 3.9-10.6 4-10.7 3.9-11.1 4-11.1 3.9-10.5 4-11.6 3.9-14.4 4-16.3 4-16.7 4-17.1 4-18 4-15.2 4-9.6 4-8 4-6.8 4-5.3 4-4.4 4.1-2.3 4 1.8 4 4 4 4.3 4.1 5.4 4 5.6 4.1 4.8 4.1 4.3 4.1 3.8 4.1 3 4.2 2.5 4.1 1.6 4.1 0.9 4.1 0.6 4.1 0.1 4-0.8 4.1-1.4 4.1-1.4 4.1-1.5 4.1-1.5 4-1.4 4-1.3 4-1.1 4-1 4-1 4-0.9 4-0.6 4-0.2 4 0 4 0 4 0.1 4 0 4 0.1 4 0.1 4 0.2 4 0.3 4 0.3 4 0.3 4 0.2 4 0.2 4 0 4 0M755.8 347l4 0 4-0.1 4-0.1 4-0.1 4-0.1 4-0.3 4-0.3 4-0.4 4-0.5 4-0.7 4-1 4-1.2 4-1.6 4-2.1 4-2.4 4-3.2 4-3.9 4-4.9 4-6.4 4-8.7 4-10.7 4-10.6 4-11.1 4-11.1 4-10.6 4-11.6 4-14.3 4-16.3 4-16.8 4-17 4-18.1 4-15.2 4-9.6 4-7.5 4-6.5 4-5.1 4-4.3 4-2.2 4 1.8 4 3.8 4 4.1 4 5.2 4 5.4 4 4.6 4 4.2 4 2.9 3.9 2.4 4 2 4 1.3 4 0.7 4 0.5 3.9 0.1 4-0.7 4-1.1 4-1.1 4-1.2 4-1.2 4-1.1 4-1 4-0.9 4-0.7 4-0.8 4-0.9 4-0.6 4-0.2 4 0 4 0 4 0.1 4 0 4 0.1 4 0.1 4 0.2 4 0.2 4 0.4 4 0.3 4 0.2 4 0.1 4 0 4 0M757.5 346.7l4 0 4-0.1 4-0.1 4-0.1 4-0.1 4-0.2 4-0.4 4-0.4 4-0.5 4-0.7 4-1 4-1.1 4-1.7 4-2 4-2.5 4-3.2 4-3.9 4.1-4.9 4-6.4 4-8.7 4-10.7 4.1-10.6 4-11.1 4.1-11.1 4.1-10.5 4.1-11.7 4-14.3 4-16.3 4.1-16.7 4-17.1 4-18.1 4-15.2 4-9.6 3.9-7.4 4-6.5 4-5 4-4.3 4-2.2 3.9 1.8 4 3.8 4 4.1 3.9 5.1 3.9 5.4 3.9 4.6 3.9 4.1 3.9 1.9 3.8 1.5 3.9 1.3 3.9 0.8 3.8 0.4 3.9 0.3 3.9 0.1 3.9-0.4 3.8-0.7 3.9-0.7 3.9-0.8 3.9-0.7 4-0.7 4-0.6 4-0.6 4-0.5 4-0.5 4-0.9 4-0.6 4-0.2 4 0 4 0.1 4 0 4 0 4 0.1 4 0.1 4 0.2 4 0.3 4 0.3 4 0.3 4 0.2 4 0.1 4 0 4 0M758.8 347l4 0 4-0.1 4 0 4-0.2 4-0.1 4-0.2 4-0.4 4-0.4 4-0.5 4-0.7 4-1 4-1.1 4-1.7 4-2 4.1-2.5 4-3.2 4-3.9 4-4.9 4.1-6.4 4-8.7 4.1-10.6 4-10.7 4.2-11.1 4.1-11.1 4.1-10.5 4.1-11.7 4.1-14.3 4.1-16.3 4-16.7 4-17.1 4-18.1 4-15.2 4-9.6 4-7.4 3.9-6.4 4-5.1 4-4.2 3.9-2.2 4 1.8 4 3.7 3.9 4.1 3.9 5.2 3.9 5.4 3.7 4.5 3.8 4.1 3.8 2.6 3.8 2.1 3.8 1.7 3.7 1.1 3.8 0.6 3.8 0.4 3.8 0.1 3.8-0.6 3.8-0.9 3.8-1 3.8-1 3.9-1 3.9-1 4-0.9 4-0.7 4-0.7 4-0.7 4-0.9 4-0.6 4-0.2 4 0 4 0.1 4 0 4 0.1 4 0 4 0.1 4 0.2 4 0.3 4 0.3 4 0.3 4 0.2 4 0.1 4 0 4 0M760.5 346.8l4 0 4-0.1 4-0.1 4-0.1 4-0.1 4-0.2 4-0.4 4-0.4 4-0.5 4-0.7 4-1 4-1.1 4-1.7 4.1-2 4-2.5 4-3.2 4.1-3.9 4-4.9 4.1-6.4 4-8.7 4.1-10.6 4.1-10.7 4.2-11.1 4.2-11.1 4.2-10.5 4.2-11.7 4.1-14.3 4.1-16.3 4-16.7 4-17.1 4-18.1 4-15.2 4-9.6 4-7.5 3.9-6.4 4-5.1 3.9-4.3 4-2.2 3.9 1.8 4 3.8 3.9 4.1 3.9 5.2 3.7 5.4 3.7 4.6 3.6 4.1 3.7 3.1 3.7 2.6 3.7 2.1 3.6 1.3 3.7 0.8 3.6 0.5 3.8 0.1 3.7-0.7 3.6-1.2 3.7-1.1 3.8-1.3 3.8-1.3 3.9-1.2 4-1 4-0.9 4-0.9 4-0.8 4-0.9 4-0.6 4-0.2 4 0 4 0.1 4 0 4 0 4 0.1 4 0.1 4 0.2 4 0.3 4 0.3 4 0.3 4 0.2 4 0.1 4 0 4 0M761.4 347l4-0.1 4 0 4-0.1 4-0.2 4-0.1 4-0.2 4-0.4 4-0.4 4-0.5 4-0.7 4-0.9 4-1.2 4-1.7 4-2 4.1-2.5 4-3.2 4-3.9 4.1-4.9 4.1-6.4 4-8.7 4.1-10.6 4.2-10.7 4.2-11.1 4.2-11.1 4.3-10.5 4.1-11.6 4.2-14.4 4.1-16.3 4-16.7 4-17.1 4-18.1 4-15.2 4-9.6 4-7.3 3.9-6.4 4-5 3.9-4.2 3.9-2.1 4 1.7 3.9 3.7 3.9 4.1 3.9 5.1 3.7 5.3 3.6 4.5 3.6 4.1 3.6 2.8 3.6 2.2 3.6 1.8 3.6 1.2 3.6 0.6 3.7 0.5 3.6 0 3.7-0.6 3.6-1 3.7-1 3.7-1.1 3.7-1.1 3.9-1 4-0.9 4-0.8 4-0.8 4-0.7 4-0.9 4-0.6 4-0.1 4 0 4 0 4 0 4 0.1 4 0 4 0.1 4 0.2 4 0.3 4 0.3 4 0.3 4 0.2 4 0.1 4 0.1 4 0M762.7 347.2l4-0.1 4 0 4-0.1 4-0.2 4-0.1 4-0.2 4-0.4 4-0.4 4-0.5 4-0.7 4-0.9 4-1.2 4-1.7 4.1-2 4-2.5 4.1-3.2 4-3.9 4.1-4.9 4.1-6.4 4.1-8.7 4-10.6 4.2-10.7 4.3-11.1 4.3-11.1 4.3-10.5 4.2-11.6 4.2-14.4 4.1-16.3 4.1-16.7 4-17.1 4-18.1 3.9-15.2 4-9.6 4-7.5 3.9-6.5 4-5.2 3.9-4.3 3.9-2.2 3.9 1.8 3.9 3.8 3.9 4.2 3.8 5.2 3.7 5.4 3.5 4.6 3.5 4.2 3.6 2.4 3.5 1.9 3.5 1.5 3.5 1 3.5 0.6 3.6 0.4 3.6 0 3.5-0.5 3.6-0.9 3.5-0.8 3.7-0.9 3.7-1 3.8-0.9 4-0.7 4-0.7 4-0.7 4-0.6 4-0.9 4-0.6 4-0.2 4 0 4 0.1 4 0 4 0 4 0.1 4 0.1 4 0.2 4 0.3 4 0.3 4 0.3 4 0.2 4 0.1 4 0.1 4 0M765 346.5l4-0.1 4 0 4-0.1 4-0.2 4-0.1 4-0.2 4-0.3 4-0.5 4-0.5 4-0.7 4-0.9 4-1.2 4.1-1.7 4-2 4.1-2.5 4-3.2 4.1-3.9 4.1-4.9 4.1-6.4 4.1-8.7 4.1-10.6 4.3-10.7 4.3-11.1 4.4-11.1 4.4-10.5 4.3-11.6 4.2-14.4 4.2-16.3 4.1-16.7 4-17.1 4-18 3.9-15.3 4-9.6 3.9-7.2 4-6.3 3.9-4.9 3.9-4.2 3.9-2.1 3.9 1.7 3.9 3.7 3.8 4 3.8 5.1 3.5 5.2 3.4 4.5 3.3 4 3.4 2.7 3.4 2.1 3.4 1.8 3.3 1.1 3.4 0.7 3.4 0.4 3.4 0.1 3.5-0.6 3.4-1 3.4-1 3.5-1 3.6-1.1 3.8-1 4-0.9 4-0.8 4-0.7 4-0.7 4-0.8 4-0.7 4-0.1 4 0 4 0 4 0.1 4 0 4 0.1 4 0 4 0.2 4 0.3 4 0.3 4 0.3 4 0.2 4 0.2 4 0 4 0M767.7 346.8l4 0 4-0.1 4-0.1 4-0.1 4-0.1 4-0.3 4-0.3 4-0.4 4-0.5 4-0.8 4-0.9 4-1.2 4.1-1.6 4-2.1 4.1-2.4 4.1-3.2 4.1-3.9 4.1-4.9 4.1-6.4 4.2-8.7 4.1-10.7 4.3-10.7 4.5-11.1 4.5-11 4.5-10.6 4.4-11.6 4.2-14.4 4.2-16.2 4.2-16.8 4-17 3.9-18.1 4-15.2 4-9.6 3.9-7.4 3.9-6.4 3.9-5.1 3.9-4.2 3.9-2.2 3.8 1.8 3.9 3.7 3.8 4.1 3.7 5.2 3.3 5.3 3.3 4.6 3.1 4.1 3.2 2.8 3.3 2.2 3.2 1.9 3.1 1.1 3.2 0.7 3.2 0.5 3.3 0.1 3.3-0.7 3.2-1 3.3-1 3.3-1.1 3.6-1.2 3.7-1 4-0.9 4-0.9 4-0.7 4-0.7 4-0.9 4-0.6 4-0.2 4 0 4 0 4 0.1 4 0 4 0.1 4 0.1 4 0.2 4 0.2 4 0.3 4 0.3 4 0.3 4 0.1 4 0"/>
<path id="r2hi" d="M763.6 346.6l4-0.1 4 0 4-0.1 4-0.1 4-0.2 4-0.2 4-0.3 4-0.5 4-0.5 4-0.7 4-0.9 4-1.2 4-1.6 4.1-2.1 4-2.5 4.1-3.2 4-3.8 4.1-4.9 4.1-6.5 4.1-8.7 4.1-10.6 4.2-10.7 4.3-11.1 4.4-11.1 4.3-10.5 4.2-11.6 4.2-14.4 4.2-16.3 4-16.7 4-17.1 4-18 4-15.2 4-9.6 3.9-5.7 4-5.4 3.9-4.2 3.9-3.6 3.9-1.8 3.9 1.5 3.9 3.1 3.9 3.5 3.8 4.3 3.6 4.5 3.5 3.8 3.4 3.5 3.5 3 3.5 2.5 3.4 2 3.5 1.3 3.4 0.8 3.5 0.5 3.5 0.1 3.6-0.7 3.5-1.2 3.5-1.1 3.6-1.2 3.6-1.3 3.9-1.1 3.9-1 4-0.9 4-0.8 4-0.9 4-0.7 4-0.5 4-0.2 4 0 4 0.1 4 0 4 0 4 0.1 4 0.1 4 0.1 4 0.3 4 0.2 4 0.3 4 0.2 4 0.1 4 0 4 0"/>
<path id="r2tl" d="M921.5 139.3l4.9 2.2 4.9 1.8 4.9 1.5 5 0.9 4.9 0.6 4.9 0.3 4.8 0.1 4.9-0.5 4.8-0.8 4.9-0.9 4.7-0.8 4.5-1 4.4-0.8 4-0.7 4-0.7 4-0.6 4-0.6 4-0.5 4-0.4 4-0.1 4 0 4 0 4 0.1 4 0 4 0 4 0.1 4 0.1 4 0.2 4 0.2 4 0.1 4 0.2M923.9 138.9l4.8 1.5 4.7 1.2 4.8 1 4.8 0.7 4.8 0.3 4.7 0.3 4.7 0 4.6-0.3 4.8-0.6 4.7-0.5 4.6-0.6 4.4-0.6 4.3-0.6 4-0.5 4-0.5 4-0.4 4-0.4 4-0.6 4-0.4 4-0.1 4 0 4 0 4 0.1 4 0 4 0 4 0.1 4 0.1 4 0.2 4 0.2 4 0.2 4 0.2M888.3 121.3l4.1-3.4 4.1-1.8 4.1 1.4 4.1 3.1 4.1 3.2 4.3 4.1 4.4 4.3 4.6 3.7 4.6 3.3 4.6 2.1 4.5 1.7 4.6 1.5 4.6 0.9 4.6 0.5 4.6 0.4 4.5 0 4.5-0.4 4.5-0.9 4.6-0.7 4.4-0.9 4.4-0.9 4.2-0.8 4-0.7 4-0.6 4-0.6 4-0.6 4-0.7 4-0.5 4-0.1 4 0 4 0 4 0.1 4 0 4 0 4 0.1 4 0.2 4 0.2 4 0.2 4 0.3 4 0.2M928.9 139.7l4.4 2.3 4.4 1.8 4.5 1.6 4.4 1 4.5 0.5 4.4 0.4 4.4 0 4.4-0.5 4.4-0.8 4.4-0.9 4.3-0.9 4.3-0.9 4.1-0.9 4-0.7 4-0.7 4-0.6 4-0.6 4-0.8 4-0.5 4-0.2 4 0 4 0 4 0.1 4 0 4 0.1 4 0 4 0.2 4 0.3 4 0.2 4 0.3 4 0.2M895 118.2l4.1-4.2 4-2.1 4 1.7 4.1 3.7 4 4 4.1 5.1 4.2 5.2 4.2 4.4 4.3 4.1 4.2 2 4.2 1.5 4.3 1.3 4.2 0.9 4.2 0.4 4.3 0.3 4.2 0.1 4.2-0.4 4.2-0.8 4.2-0.7 4.2-0.7 4.1-0.8 4.1-0.8 4-0.6 4-0.6 4-0.5 4-0.5 4-0.9 4-0.6 4-0.2 4 0 4 0.1 4 0 4 0.1 4 0 4 0.1 4 0.2 4 0.3 4 0.3 4 0.3 4 0.2M897.5 115.4l4-4.4 4.1-2.3 4 1.8 4 4 4 4.3 4.1 5.4 4 5.6 4.1 4.8 4.1 4.3 4.1 3.8 4.1 3 4.2 2.5 4.1 1.6 4.1 0.9 4.1 0.6 4.1 0.1 4-0.8 4.1-1.4 4.1-1.4 4.1-1.5 4.1-1.5 4-1.4 4-1.3 4-1.1 4-1 4-1 4-0.9 4-0.6 4-0.2 4 0 4 0 4 0.1 4 0 4 0.1 4 0.1 4 0.2 4 0.3 4 0.3 4 0.3 4 0.2M899.8 116.9l4-4.3 4-2.2 4 1.8 4 3.8 4 4.1 4 5.2 4 5.4 4 4.6 4 4.2 4 2.9 3.9 2.4 4 2 4 1.3 4 0.7 4 0.5 3.9 0.1 4-0.7 4-1.1 4-1.1 4-1.2 4-1.2 4-1.1 4-1 4-0.9 4-0.7 4-0.8 4-0.9 4-0.6 4-0.2 4 0 4 0 4 0.1 4 0 4 0.1 4 0.1 4 0.2 4 0.2 4 0.4 4 0.3 4 0.2M902 116.8l4-4.3 4-2.2 3.9 1.8 4 3.8 4 4.1 3.9 5.1 3.9 5.4 3.9 4.6 3.9 4.1 3.9 1.9 3.8 1.5 3.9 1.3 3.9 0.8 3.8 0.4 3.9 0.3 3.9 0.1 3.9-0.4 3.8-0.7 3.9-0.7 3.9-0.8 3.9-0.7 4-0.7 4-0.6 4-0.6 4-0.5 4-0.5 4-0.9 4-0.6 4-0.2 4 0 4 0.1 4 0 4 0 4 0.1 4 0.1 4 0.2 4 0.3 4 0.3 4 0.3 4 0.2M903.7 117.1l4-4.2 3.9-2.2 4 1.8 4 3.7 3.9 4.1 3.9 5.2 3.9 5.4 3.7 4.5 3.8 4.1 3.8 2.6 3.8 2.1 3.8 1.7 3.7 1.1 3.8 0.6 3.8 0.4 3.8 0.1 3.8-0.6 3.8-0.9 3.8-1 3.8-1 3.9-1 3.9-1 4-0.9 4-0.7 4-0.7 4-0.7 4-0.9 4-0.6 4-0.2 4 0 4 0.1 4 0 4 0.1 4 0 4 0.1 4 0.2 4 0.3 4 0.3 4 0.3 4 0.2M905.9 116.8l3.9-4.3 4-2.2 3.9 1.8 4 3.8 3.9 4.1 3.9 5.2 3.7 5.4 3.7 4.6 3.6 4.1 3.7 3.1 3.7 2.6 3.7 2.1 3.6 1.3 3.7 0.8 3.6 0.5 3.8 0.1 3.7-0.7 3.6-1.2 3.7-1.1 3.8-1.3 3.8-1.3 3.9-1.2 4-1 4-0.9 4-0.9 4-0.8 4-0.9 4-0.6 4-0.2 4 0 4 0.1 4 0 4 0 4 0.1 4 0.1 4 0.2 4 0.3 4 0.3 4 0.3 4 0.2M907 117.2l3.9-4.2 3.9-2.1 4 1.7 3.9 3.7 3.9 4.1 3.9 5.1 3.7 5.3 3.6 4.5 3.6 4.1 3.6 2.8 3.6 2.2 3.6 1.8 3.6 1.2 3.6 0.6 3.7 0.5 3.6 0 3.7-0.6 3.6-1 3.7-1 3.7-1.1 3.7-1.1 3.9-1 4-0.9 4-0.8 4-0.8 4-0.7 4-0.9 4-0.6 4-0.1 4 0 4 0 4 0 4 0.1 4 0 4 0.1 4 0.2 4 0.3 4 0.3 4 0.3 4 0.2M908.7 116.9l3.9-4.3 3.9-2.2 3.9 1.8 3.9 3.8 3.9 4.2 3.8 5.2 3.7 5.4 3.5 4.6 3.5 4.2 3.6 2.4 3.5 1.9 3.5 1.5 3.5 1 3.5 0.6 3.6 0.4 3.6 0 3.5-0.5 3.6-0.9 3.5-0.8 3.7-0.9 3.7-1 3.8-0.9 4-0.7 4-0.7 4-0.7 4-0.6 4-0.9 4-0.6 4-0.2 4 0 4 0.1 4 0 4 0 4 0.1 4 0.1 4 0.2 4 0.3 4 0.3 4 0.3 4 0.2M911.6 117l3.9-4.2 3.9-2.1 3.9 1.7 3.9 3.7 3.8 4 3.8 5.1 3.5 5.2 3.4 4.5 3.3 4 3.4 2.7 3.4 2.1 3.4 1.8 3.3 1.1 3.4 0.7 3.4 0.4 3.4 0.1 3.5-0.6 3.4-1 3.4-1 3.5-1 3.6-1.1 3.8-1 4-0.9 4-0.8 4-0.7 4-0.7 4-0.8 4-0.7 4-0.1 4 0 4 0 4 0.1 4 0 4 0.1 4 0 4 0.2 4 0.3 4 0.3 4 0.3 4 0.2M915 116.9l3.9-4.2 3.9-2.2 3.8 1.8 3.9 3.7 3.8 4.1 3.7 5.2 3.3 5.3 3.3 4.6 3.1 4.1 3.2 2.8 3.3 2.2 3.2 1.9 3.1 1.1 3.2 0.7 3.2 0.5 3.3 0.1 3.3-0.7 3.2-1 3.3-1 3.3-1.1 3.6-1.2 3.7-1 4-0.9 4-0.9 4-0.7 4-0.7 4-0.9 4-0.6 4-0.2 4 0 4 0 4 0.1 4 0 4 0.1 4 0.1 4 0.2 4 0.2 4 0.3 4 0.3 4 0.3M948.1 139.4l3.2 2.7 3.2 2.1 3.2 1.7 3.1 1.1 3.1 0.6 3.2 0.5 3.3 0 3.3-0.5 3.2-1 3.2-1 3.4-1 3.5-1.1 3.7-0.9 4-0.9 4-0.8 4-0.6 4-0.7 4-1 4-0.6 4-0.2 4 0 4 0 4 0.1 4 0 4 0.1 4 0.1 4 0.2 4 0.3 4 0.3 4 0.3 4 0.3M949.5 139.7l3.1 3.7 3.1 3 3.1 2.6 3 1.6 3.1 0.9 3.1 0.6 3.2 0.1 3.1-0.8 3.2-1.4 3.1-1.4 3.3-1.5 3.5-1.6 3.6-1.4 4-1.2 4-1.2 4-0.9 4-1 4-0.9 4-0.6 4-0.1 4 0 4 0 4 0 4 0.1 4 0 4 0.1 4 0.2 4 0.3 4 0.3 4 0.3 4 0.2"/>
<path id="r2th" d="M909.8 120.3l3.9-3.6 3.9-1.8 3.9 1.5 3.9 3.1 3.9 3.5 3.8 4.3 3.6 4.5 3.5 3.8 3.4 3.5 3.5 3 3.5 2.5 3.4 2 3.5 1.3 3.4 0.8 3.5 0.5 3.5 0.1 3.6-0.7 3.5-1.2 3.5-1.1 3.6-1.2 3.6-1.3 3.9-1.1 3.9-1 4-0.9 4-0.8 4-0.9 4-0.7 4-0.5 4-0.2 4 0 4 0.1 4 0 4 0 4 0.1 4 0.1 4 0.1 4 0.3 4 0.2 4 0.3 4 0.2"/>
<path id="r2red" d="M790.1 346.1l4-0.3 4-0.4 4-0.5 4-0.8 4-0.9 4-1.2 4.1-1.6 4-2.1 4.1-2.4 4.1-3.2 4.1-3.9M909.1 126.9l3.9-3.6 3.9-3.1 3.9-1.5 3.9 1.2 3.9 2.7 3.8 3"/>
<path id="r2rt" d="M954.5 145.2l3.2 1.6 3.3 0.8 3.3 0.5 3.3 0.3 3.4-0.2 3.4-0.9 3.3-1 3.4-1 3.5-1.2 3.7-1.1 3.9-0.9 4-0.9 4-0.8 4-0.7 4-0.7 4-0.5 4-0.3 4 0 4 0 4 0 4 0 4 0.1 4 0 4 0.1 4 0.2 4 0.2 4 0.2 4 0.2 4 0.2 4 0 4 0"/>
<path id="r2org" d="M766.1 346.8l4 0 4-0.1 4-0.1 4-0.1 4-0.2 4-0.2 4-0.3 4-0.4 4-0.5 4-0.8 4-0.9 4-1.2 4.1-1.6 4-2.1 4.1-2.4 4.1-3.2 4.1-3.9 4.1-4.9 4.1-6.4 4.1-8.7 4.1-10.7 4.3-10.7 4.4-11.1 4.5-11 4.4-10.6 4.3-11.6 4.2-14.4 4.2-16.3 4.1-16.7 4-17 4-18.1 4-15.2 3.9-9.6 4-4.3 3.9-4.6 3.9-3.6 3.9-3.1 3.9-1.5 3.9 1.2 3.9 2.7 3.8 3 3.7 3.7 3.5 3.8 3.3 3.2 3.3 3 3.3 2.7 3.3 2.2 3.3 1.9 3.2 1.1 3.3 0.7 3.3 0.4 3.4 0.1 3.4-0.6 3.3-1 3.4-1 3.5-1.1 3.5-1.1 3.8-1.1 4-0.9 4-0.8 4-0.7 4-0.7 4-0.7 4-0.4 4-0.1 4 0 4 0 4 0 4 0.1 4 0 4 0.1 4 0.1 4 0.2 4 0.2 4 0.2 4 0.2 4 0.1 4 0 4 0"/>
<path id="f2lo" d="M741.5 139.5l4 0 4 0 4 0.1 4 0.1 4 0.1 4 0.2 4 0.2 4 0.4 4 0.5 4 0.5 4 0.8 4 1.1 4 1.3 3.9 1.9 3.9 2.2 3.9 2.8 3.9 3.6 3.9 4.3 3.8 5.8 3.8 7.5 3.8 10.2 3.7 10.9 3.5 11.2 3.4 11.3 3.4 11 3.6 11.2 3.7 13.6 3.7 16.2 3.9 17.1 4 17 4 18.6 4.1 16.7 4 10.9 4.1 2.9 4.1 3.3 4.1 2.6 4.1 2.2 4.2 1.3 4.1-0.8 4.2-1.9 4.2-2 4.4-2.6 4.7-2.6 4.9-2.5 5-2.8 4.9-2.9 4.9-2.3 4.9-0.9 5-0.2 4.9 0.2 4.9 0.3 4.8 0.4 4.9 0.4 4.8 0.4 4.9 0.3 4.7 0.4 4.5 0.4 4.4 0.4 4 0.4 4 0.4 4 0.4 4 0.4 4 0.3 4 0.3 4 0.3 4 0.3 4 0.3 4 0.2 4 0.3 4 0.2 4 0.3 4 0.2 4 0.2 4 0.1 4 0.2 4 0.1 4 0 4 0 4 0M744.2 139l4 0 4 0.1 4 0 4 0.2 4 0.1 4 0.1 4 0.3 4 0.4 4 0.4 4 0.6 4 0.8 4 1 4 1.4 3.9 1.8 4 2.3 3.9 2.8 3.9 3.6 3.9 4.3 3.9 5.8 3.8 7.5 3.9 10.2 3.7 10.9 3.6 11.1 3.5 11.4 3.5 10.9 3.7 11.2 3.8 13.7 3.8 16.1 3.9 17.1 4 17.1 4 18.6 4 16.6 4.1 11 4 3.8 4.1 4 4.1 3.2 4.1 2.6 4.1 1.5 4.1-0.9 4.2-2.3 4.1-2.4 4.4-3.1 4.5-3.2 4.7-3 4.8-3.2 4.7-2.8 4.7-2.3 4.8-0.9 4.8-0.2 4.8 0.2 4.7 0.3 4.6 0.4 4.7 0.4 4.7 0.3 4.7 0.4 4.5 0.3 4.5 0.4 4.2 0.4 4.1 0.4 4 0.5 4 0.4 4 0.3 4 0.3 4 0.4 4 0.3 4 0.3 4 0.2 4 0.3 4 0.2 4 0.3 4 0.3 4 0.2 4 0.2 4 0.2 4 0.2 4 0.1 4 0 4 0 4 0M749.9 139.7l4 0 4 0 4 0.1 4 0.1 4 0.1 4 0.2 4 0.3 4 0.3 4 0.5 4 0.5 4 0.9 4 1 4 1.4 4 1.8 3.9 2.2 4 2.9 3.9 3.5 4 4.4 3.9 5.7 3.9 7.5 4 10.2 3.8 10.9 3.8 11.2 3.8 11.4 3.8 10.9 3.8 11.2 3.9 13.6 3.9 16.2 3.9 17.1 4 17.1 4 18.5 4 16.7 4.1 11 4 6.3 4 5.8 4.1 4.6 4 3.7 4.1 2.2 4.1-1.3 4-3.3 4.1-3.5 4.2-4.4 4.2-4.6 4.4-4.3 4.4-4.1 4.3-2.5 4.4-2 4.4-0.8 4.4-0.1 4.3 0.1 4.4 0.3 4.3 0.3 4.4 0.4 4.3 0.3 4.3 0.3 4.3 0.3 4.3 0.3 4.1 0.4 4 0.4 4 0.3 4 0.4 4 0.3 4 0.3 4 0.3 4 0.2 4 0.3 4 0.2 4 0.2 4 0.3 4 0.2 4 0.2 4 0.4 4 0.3 4 0.3 4 0.2 4 0.2 4 0 4 0 4 0M768.7 139.9l4 0 4 0 4 0.1 4 0.1 4 0.1 4 0.2 4 0.3 4 0.3 4 0.5 4 0.6 4 0.8 4 1 4 1.4 4.1 1.8 4.1 2.3 4.1 2.8 4.1 3.5 4.1 4.4 4.1 5.7 4.2 7.5 4.2 10.2 4.3 10.9 4.5 11.2 4.6 11.4 4.5 10.9 4.4 11.2 4.3 13.6 4.2 16.2 4.1 17.1 4 17.1 4 18.5 4 16.7 3.9 11 3.9 6.7 4 6 3.8 4.8 3.9 3.9 3.9 2.3 3.8-1.4 3.9-3.4 3.8-3.7 3.6-4.6 3.3-4.8 3.2-4.5 3.1-4.6 3.2-3.7 3.1-3 3.1-1.1 3.1-0.2 3.1 0.2 3.2 0.4 3.2 0.5 3.2 0.5 3.2 0.5 3.2 0.4 3.4 0.5 3.4 0.5 3.7 0.5 4 0.5 4 0.6 4 0.5 4 0.5 4 0.4 4 0.4 4 0.4 4 0.4 4 0.3 4 0.4 4 0.3 4 0.3 4 0.3 4 0.4 4 0.3 4 0.3 4 0.3 4 0.1 4 0.1 4 0M769.5 139.2l4 0 4 0.1 4 0.1 4 0.1 4 0.1 4 0.1 4 0.3 4 0.4 4 0.4 4 0.6 4 0.8 4 1 4 1.4 4.1 1.9 4.1 2.2 4.1 2.8 4.1 3.6 4.1 4.3 4.2 5.8 4.2 7.5 4.2 10.2 4.3 10.9 4.5 11.1 4.6 11.4 4.6 10.9 4.4 11.2 4.3 13.7 4.3 16.1 4.1 17.1 4 17.1 4 18.6 3.9 16.6 4 11 3.9 6.4 3.9 5.8 3.9 4.6 3.9 3.8 3.8 2.2 3.9-1.3 3.8-3.3 3.8-3.6 3.6-4.4 3.3-4.6 3.1-4.4 3-4.9 3.1-5 3.1-4.1 3.1-1.6 3-0.3 3.1 0.4 3.1 0.5 3.2 0.7 3.1 0.6 3.2 0.7 3.1 0.6 3.3 0.6 3.5 0.7 3.6 0.7 4 0.8 4 0.7 4 0.7 4 0.6 4 0.6 4 0.6 4 0.5 4 0.5 4 0.5 4 0.5 4 0.4 4 0.4 4 0.5 4 0.3 4 0.3 4 0.3 4 0.2 4 0.2 4 0.1 4 0"/>
<path id="f2mid" d="M747.1 139.5l4 0.1 4 0 4 0.1 4 0.1 4 0.1 4 0.2 4 0.2 4 0.4 4 0.4 4 0.6 4 0.8 4 1.1 4 1.3 3.9 1.9 4 2.2 3.9 2.8 3.9 3.6 4 4.3 3.9 5.8 3.9 7.5 3.9 10.2 3.8 10.9 3.6 11.1 3.7 11.4 3.6 10.9 3.8 11.2 3.8 13.7 3.8 16.1 4 17.2 4 17 4 18.6 4 16.6 4 11 4.1 4.9 4 4.7 4.1 3.7 4.1 3.1 4.1 1.8 4.1-1.1 4.1-2.7 4.1-2.9 4.2-3.6 4.5-3.7 4.5-3.6 4.6-3.2 4.5-1.8 4.5-1.4 4.6-0.6 4.6-0.1 4.6 0.1 4.5 0.2 4.5 0.2 4.5 0.3 4.5 0.2 4.5 0.2 4.4 0.3 4.4 0.2 4.2 0.3 4 0.2 4 0.3 4 0.2 4 0.3 4 0.2 4 0.2 4 0.2 4 0.2 4 0.1 4 0.2 4 0.1 4 0.2 4 0.2 4 0.3 4 0.2 4 0.2 4 0.2 4 0.2 4 0 4 0 4 0M751.7 138.5l4 0 4 0 4 0.1 4 0.1 4 0.1 4 0.2 4 0.2 4 0.4 4 0.5 4 0.5 4 0.9 4 1 4 1.4 4 1.8 3.9 2.2 4 2.9 4 3.5 3.9 4.4 4 5.7 4 7.5 3.9 10.2 3.9 10.9 3.9 11.2 3.8 11.4 3.9 10.9 3.8 11.2 4 13.6 3.9 16.2 4 17.1 4 17 4 18.6 4 16.7 4 11 4 6.6 4 6 4.1 4.8 4 3.9 4 2.3 4.1-1.4 4-3.4 4.1-3.7 4.1-4.5 4.2-4.8 4.2-4.5 4.3-4.4 4.2-3.1 4.3-2.6 4.2-0.9 4.3-0.2 4.3 0.2 4.2 0.3 4.2 0.4 4.2 0.5 4.3 0.4 4.2 0.3 4.2 0.4 4.2 0.4 4 0.5 4 0.5 4 0.4 4 0.4 4 0.4 4 0.4 4 0.3 4 0.4 4 0.3 4 0.3 4 0.3 4 0.2 4 0.3 4 0.3 4 0.4 4 0.3 4 0.3 4 0.2 4 0.2 4 0.1 4 0 4 0M755.2 140.1l4 0 4 0 4 0.1 4 0.1 4 0.1 4 0.2 4 0.2 4 0.4 4 0.5 4 0.5 4 0.9 4 1 4 1.3 4 1.9 4 2.2 4 2.8 4 3.6 4 4.4 4 5.7 4 7.5 4 10.2 4 10.9 4 11.2 4 11.3 4 11 4 11.2 4 13.6 4 16.2 4 17.1 4 17 4 18.6 4 16.7 4 10.9 4 6.5 4 5.8 4 4.7 4 3.8 4 2.2 4-1.3 4-3.3 4-3.7 4-4.4 4-4.7 4-4.3 4-4.6 4.1-4 4-3.3 4-1.2 4-0.3 4 0.3 4 0.4 4.1 0.5 4 0.6 4 0.5 4 0.5 4 0.5 4 0.5 4 0.6 4 0.6 4 0.6 4 0.5 4 0.5 4 0.5 4 0.5 4 0.4 4 0.4 4 0.4 4 0.3 4 0.4 4 0.3 4 0.4 4 0.4 4 0.3 4 0.3 4 0.2 4 0.2 4 0 4 0 4 0M757.4 138.6l4 0 4 0.1 4 0.1 4 0.1 4 0.1 4 0.1 4 0.3 4 0.4 4 0.4 4 0.6 4 0.8 4 1.1 4 1.3 4 1.9 4 2.2 4.1 2.8 4 3.6 4 4.3 4 5.8 4 7.5 4.1 10.2 4 10.9 4.1 11.1 4.1 11.4 4 10.9 4.1 11.2 4 13.7 4.1 16.1 4 17.2 4 17 4 18.6 4 16.6 4 11 4 7 3.9 6.3 4 5 4 4 4 2.4 4-1.4 3.9-3.6 4-3.8 4-4.8 3.9-5 3.8-4.6 3.9-4.6 3.9-3.4 3.9-2.8 3.8-1 3.9-0.2 3.9 0.2 3.9 0.4 3.8 0.4 3.9 0.5 3.9 0.4 3.9 0.4 3.9 0.4 3.9 0.5 4 0.5 4 0.5 4 0.5 4 0.4 4 0.5 4 0.4 4 0.3 4 0.4 4 0.4 4 0.3 4 0.3 4 0.3 4 0.3 4 0.3 4 0.3 4 0.4 4 0.3 4 0.3 4 0.1 4 0.1 4 0 4 0M760.5 139.3l4 0 4 0.1 4 0 4 0.1 4 0.2 4 0.1 4 0.3 4 0.4 4 0.4 4 0.6 4 0.8 4 1 4 1.4 4 1.8 4 2.3 4.1 2.8 4 3.6 4.1 4.3 4 5.7 4.1 7.6 4 10.2 4.1 10.9 4.2 11.1 4.3 11.4 4.2 10.9 4.1 11.2 4.1 13.6 4.1 16.2 4 17.1 4 17.1 4 18.6 4 16.6 4 11 4 6.5 3.9 5.8 4 4.7 4 3.8 3.9 2.2 3.9-1.3 4-3.3 3.9-3.7 3.9-4.4 3.7-4.7 3.7-4.4 3.7-4.1 3.7-2.8 3.6-2.2 3.7-0.8 3.7-0.2 3.6 0.2 3.7 0.3 3.7 0.4 3.7 0.3 3.7 0.4 3.7 0.3 3.8 0.3 3.8 0.4 3.9 0.4 3.9 0.4 4 0.4 4 0.4 4 0.3 4 0.3 4 0.3 4 0.3 4 0.3 4 0.3 4 0.2 4 0.3 4 0.2 4 0.3 4 0.3 4 0.3 4 0.3 4 0.2 4 0.2 4 0.1 4 0 4 0M762.6 139.7l4 0 4 0 4 0.1 4 0.1 4 0.1 4 0.2 4 0.3 4 0.3 4 0.5 4 0.6 4 0.8 4 1 4 1.4 4 1.8 4.1 2.2 4 2.9 4.1 3.5 4.1 4.4 4 5.7 4.1 7.5 4.1 10.2 4.2 10.9 4.2 11.2 4.4 11.4 4.2 10.9 4.3 11.2 4.1 13.6 4.1 16.2 4.1 17.1 4 17.1 4 18.5 4 16.7 3.9 11 4 6.9 4 6.1 3.9 5 3.9 4 4 2.3 3.9-1.4 3.9-3.5 3.9-3.8 3.8-4.7 3.6-4.9 3.6-4.6 3.5-5.1 3.5-4.7 3.6-3.9 3.5-1.5 3.5-0.3 3.5 0.4 3.6 0.4 3.6 0.7 3.6 0.6 3.5 0.7 3.6 0.5 3.6 0.6 3.8 0.7 3.8 0.6 4 0.8 4 0.6 4 0.7 4 0.6 4 0.6 4 0.5 4 0.5 4 0.5 4 0.4 4 0.5 4 0.4 4 0.4 4 0.4 4 0.4 4 0.3 4 0.3 4 0.3 4 0.2 4 0 4 0 4 0M765.2 139.9l4 0 4 0.1 4 0 4 0.1 4 0.2 4 0.1 4 0.3 4 0.3 4 0.5 4 0.6 4 0.8 4 1 4 1.4 4 1.8 4.1 2.3 4.1 2.8 4 3.6 4.1 4.3 4.1 5.7 4.2 7.6 4.1 10.2 4.2 10.9 4.4 11.1 4.4 11.4 4.4 10.9 4.3 11.2 4.2 13.6 4.2 16.2 4.1 17.1 4 17.1 3.9 18.6 4 16.6 4 11 3.9 6.5 4 5.9 3.9 4.7 3.9 3.9 3.9 2.2 3.9-1.3 3.9-3.4 3.8-3.6 3.7-4.5 3.6-4.7 3.3-4.4 3.4-5 3.4-4.7 3.4-3.8 3.3-1.5 3.3-0.3 3.4 0.3 3.4 0.5 3.4 0.6 3.4 0.7 3.4 0.6 3.5 0.6 3.4 0.6 3.7 0.6 3.7 0.7 4 0.7 4 0.7 4 0.6 4 0.6 4 0.6 4 0.5 4 0.5 4 0.5 4 0.5 4 0.4 4 0.4 4 0.4 4 0.4 4 0.4 4 0.3 4 0.3 4 0.2 4 0.2 4 0.1 4 0 4 0M767.4 138.9l4 0 4 0 4 0.1 4 0.1 4 0.2 4 0.1 4 0.3 4 0.3 4 0.5 4 0.6 4 0.8 4.1 1 4 1.4 4 1.8 4.1 2.3 4.1 2.8 4.1 3.5 4.1 4.4 4.1 5.7 4.2 7.5 4.1 10.2 4.3 11 4.5 11.1 4.5 11.4 4.5 10.9 4.3 11.2 4.3 13.6 4.2 16.2 4.1 17.1 4 17.1 4 18.5 4 16.7 3.9 11 4 6.5 3.9 5.9 3.9 4.8 3.9 3.8 3.8 2.3 3.9-1.4 3.8-3.4 3.9-3.6 3.6-4.5 3.4-4.7 3.3-4.4 3.2-5.1 3.2-5 3.2-4 3.2-1.6 3.2-0.3 3.2 0.4 3.2 0.5 3.4 0.6 3.2 0.7 3.3 0.7 3.3 0.6 3.4 0.6 3.5 0.7 3.7 0.7 4 0.7 4 0.8 4 0.7 4 0.6 4 0.6 4 0.5 4 0.6 4 0.5 4 0.5 4 0.4 4 0.5 4 0.4 4 0.4 4 0.4 4 0.3 4 0.3 4 0.2 4 0.2 4 0.1 4 0 4 0"/>
<path id="f2hi" d="M753.8 138.8l4 0 4 0.1 4 0 4 0.1 4 0.2 4 0.1 4 0.3 4 0.4 4 0.4 4 0.6 4 0.8 4 1 4 1.4 4 1.8 4 2.3 4 2.8 3.9 3.6 4 4.3 4 5.7 4 7.6 4 10.2 3.9 10.9 4 11.1 3.9 11.4 3.9 10.9 4 11.2 3.9 13.6 4 16.2 4 17.1 4 17.1 4 18.6 4 16.6 4 11 4 5.2 4 5 4 4 4 3.3 4.1 1.9 4-1.2 4-2.8 4-3.1 4.1-3.8 4.1-4 4.1-3.7 4.1-3.7 4.1-2.7 4.1-2.2 4.1-0.9 4.1-0.2 4.2 0.2 4.1 0.3 4.1 0.4 4.1 0.3 4.1 0.4 4.1 0.3 4.1 0.4 4 0.3 4.1 0.4 4 0.4 4 0.4 4 0.4 4 0.3 4 0.3 4 0.4 4 0.2 4 0.3 4 0.3 4 0.2 4 0.3 4 0.2 4 0.2 4 0.3 4 0.3 4 0.3 4 0.2 4 0.1 4 0.1 4 0 4 0M759.1 139.5l4 0 4 0.1 4 0 4 0.2 4 0.1 4 0.1 4 0.3 4 0.4 4 0.4 4 0.6 4 0.8 4 1 4 1.4 4 1.8 4 2.3 4 2.8 4.1 3.6 4 4.3 4 5.8 4.1 7.5 4 10.2 4.1 10.9 4.1 11.1 4.2 11.4 4.1 10.9 4.2 11.2 4 13.7 4.1 16.1 4 17.1 4 17.1 4 18.6 4 16.6 4 11 4 5.6 4 5.3 3.9 4.2 4 3.4 4 2 3.9-1.2 4-3 3.9-3.3 3.9-4 3.8-4.2 3.8-3.9 3.8-4.1 3.7-3.4 3.8-2.7 3.8-1.1 3.7-0.2 3.8 0.3 3.8 0.3 3.8 0.5 3.7 0.4 3.8 0.5 3.8 0.4 3.8 0.4 3.9 0.5 3.9 0.4 4 0.5 4 0.5 4 0.5 4 0.4 4 0.4 4 0.4 4 0.4 4 0.3 4 0.4 4 0.3 4 0.2 4 0.3 4 0.4 4 0.3 4 0.3 4 0.2 4 0.2 4 0.2 4 0 4 0.1 4-0.1M761.4 140.1l4 0 4 0 4 0.1 4 0.1 4 0.1 4 0.2 4 0.3 4 0.3 4 0.5 4 0.6 4 0.8 4 1 4.1 1.4 4 1.8 4 2.3 4.1 2.8 4 3.5 4.1 4.4 4 5.7 4.1 7.5 4.1 10.2 4.1 11 4.3 11.1 4.2 11.4 4.3 10.9 4.1 11.2 4.2 13.6 4.1 16.2 4 17.1 4 17.1 4 18.5 4 16.7 4 11 3.9 5.4 4 5.1 3.9 4.1 4 3.3 3.9 2 4-1.2 3.9-2.9 3.9-3.2 3.8-3.9 3.7-4.1 3.7-3.8 3.6-4.5 3.6-4.6 3.6-3.9 3.6-1.4 3.6-0.3 3.6 0.3 3.6 0.5 3.7 0.6 3.6 0.7 3.6 0.6 3.7 0.6 3.7 0.5 3.7 0.7 3.9 0.7 4 0.6 4 0.7 4 0.7 4 0.6 4 0.5 4 0.5 4 0.5 4 0.5 4 0.5 4 0.4 4 0.4 4 0.4 4 0.4 4 0.3 4 0.3 4 0.3 4 0.2 4 0.1 4 0.1 4 0 4 0"/>
<path id="f2top" d="M764.1 140.2l4 0 4 0.1 4 0 4 0.1 4 0.2 4 0.1 4 0.3 4 0.4 4 0.4 4 0.6 4 0.8 4 1 4 1.4 4.1 1.8 4 2.3 4.1 2.8 4.1 3.6 4.1 4.3 4 5.7 4.1 7.6 4.2 10.2 4.2 10.9 4.3 11.1 4.4 11.4 4.3 10.9 4.3 11.2 4.1 13.6 4.2 16.2 4.1 17.1 4 17.1 4 18.6 4 16.6 3.9 11 4 5.4 3.9 5.1 3.9 4.1 4 3.3 3.9 2 3.9-1.2 3.9-2.9 3.8-3.2 3.8-3.9 3.6-4 3.4-3.9 3.4-4.5 3.5-4.7 3.4-3.9 3.5-1.4 3.4-0.3 3.4 0.3 3.4 0.5 3.5 0.6 3.5 0.7 3.5 0.6 3.5 0.6 3.5 0.6 3.7 0.6 3.8 0.7 4 0.7 4 0.7 4 0.6 4 0.6 4 0.6 4 0.5 4 0.5 4 0.5 4 0.5 4 0.4 4 0.4 4 0.4 4 0.4 4 0.3 4 0.3 4 0.3 4 0.2 4 0.1 4 0.1 4 0 4 0"/>
<path id="f2tl" d="M921.5 345.9l4.9-2.9 4.9-2.3 4.9-0.9 5-0.2 4.9 0.2 4.9 0.3 4.8 0.4 4.9 0.4 4.8 0.4 4.9 0.3 4.7 0.4 4.5 0.4 4.4 0.4 4 0.4 4 0.4 4 0.4 4 0.4 4 0.3 4 0.3 4 0.3 4 0.3 4 0.3 4 0.2 4 0.3 4 0.2 4 0.3 4 0.2 4 0.2 4 0.1 4 0.2 4 0.1M924.2 345.4l4.7-2.8 4.7-2.3 4.8-0.9 4.8-0.2 4.8 0.2 4.7 0.3 4.6 0.4 4.7 0.4 4.7 0.3 4.7 0.4 4.5 0.3 4.5 0.4 4.2 0.4 4.1 0.4 4 0.5 4 0.4 4 0.3 4 0.3 4 0.4 4 0.3 4 0.3 4 0.2 4 0.3 4 0.2 4 0.3 4 0.3 4 0.2 4 0.2 4 0.2 4 0.2 4 0.1M888.8 362.2l4.1 3.1 4.1 1.8 4.1-1.1 4.1-2.7 4.1-2.9 4.2-3.6 4.5-3.7 4.5-3.6 4.6-3.2 4.5-1.8 4.5-1.4 4.6-0.6 4.6-0.1 4.6 0.1 4.5 0.2 4.5 0.2 4.5 0.3 4.5 0.2 4.5 0.2 4.4 0.3 4.4 0.2 4.2 0.3 4 0.2 4 0.3 4 0.2 4 0.3 4 0.2 4 0.2 4 0.2 4 0.2 4 0.1 4 0.2 4 0.1 4 0.2 4 0.2 4 0.3 4 0.2 4 0.2 4 0.2 4 0.2M929.9 346.2l4.3-2.5 4.4-2 4.4-0.8 4.4-0.1 4.3 0.1 4.4 0.3 4.3 0.3 4.4 0.4 4.3 0.3 4.3 0.3 4.3 0.3 4.3 0.3 4.1 0.4 4 0.4 4 0.3 4 0.4 4 0.3 4 0.3 4 0.3 4 0.2 4 0.3 4 0.2 4 0.2 4 0.3 4 0.2 4 0.2 4 0.4 4 0.3 4 0.3 4 0.2 4 0.2M894.7 365.3l4 3.9 4 2.3 4.1-1.4 4-3.4 4.1-3.7 4.1-4.5 4.2-4.8 4.2-4.5 4.3-4.4 4.2-3.1 4.3-2.6 4.2-0.9 4.3-0.2 4.3 0.2 4.2 0.3 4.2 0.4 4.2 0.5 4.3 0.4 4.2 0.3 4.2 0.4 4.2 0.4 4 0.5 4 0.5 4 0.4 4 0.4 4 0.4 4 0.4 4 0.3 4 0.4 4 0.3 4 0.3 4 0.3 4 0.2 4 0.3 4 0.3 4 0.4 4 0.3 4 0.3 4 0.2 4 0.2M899.2 366.4l4 3.8 4 2.2 4-1.3 4-3.3 4-3.7 4-4.4 4-4.7 4-4.3 4-4.6 4.1-4 4-3.3 4-1.2 4-0.3 4 0.3 4 0.4 4.1 0.5 4 0.6 4 0.5 4 0.5 4 0.5 4 0.5 4 0.6 4 0.6 4 0.6 4 0.5 4 0.5 4 0.5 4 0.5 4 0.4 4 0.4 4 0.4 4 0.3 4 0.4 4 0.3 4 0.4 4 0.4 4 0.3 4 0.3 4 0.2 4 0.2M901.9 366.3l4 4 4 2.4 4-1.4 3.9-3.6 4-3.8 4-4.8 3.9-5 3.8-4.6 3.9-4.6 3.9-3.4 3.9-2.8 3.8-1 3.9-0.2 3.9 0.2 3.9 0.4 3.8 0.4 3.9 0.5 3.9 0.4 3.9 0.4 3.9 0.4 3.9 0.5 4 0.5 4 0.5 4 0.5 4 0.4 4 0.5 4 0.4 4 0.3 4 0.4 4 0.4 4 0.3 4 0.3 4 0.3 4 0.3 4 0.3 4 0.3 4 0.4 4 0.3 4 0.3 4 0.1M905.8 365.7l4 3.8 3.9 2.2 3.9-1.3 4-3.3 3.9-3.7 3.9-4.4 3.7-4.7 3.7-4.4 3.7-4.1 3.7-2.8 3.6-2.2 3.7-0.8 3.7-0.2 3.6 0.2 3.7 0.3 3.7 0.4 3.7 0.3 3.7 0.4 3.7 0.3 3.8 0.3 3.8 0.4 3.9 0.4 3.9 0.4 4 0.4 4 0.4 4 0.3 4 0.3 4 0.3 4 0.3 4 0.3 4 0.3 4 0.2 4 0.3 4 0.2 4 0.3 4 0.3 4 0.3 4 0.3 4 0.2 4 0.2M908.5 367.1l3.9 4 4 2.3 3.9-1.4 3.9-3.5 3.9-3.8 3.8-4.7 3.6-4.9 3.6-4.6 3.5-5.1 3.5-4.7 3.6-3.9 3.5-1.5 3.5-0.3 3.5 0.4 3.6 0.4 3.6 0.7 3.6 0.6 3.5 0.7 3.6 0.5 3.6 0.6 3.8 0.7 3.8 0.6 4 0.8 4 0.6 4 0.7 4 0.6 4 0.6 4 0.5 4 0.5 4 0.5 4 0.4 4 0.5 4 0.4 4 0.4 4 0.4 4 0.4 4 0.3 4 0.3 4 0.3 4 0.2M911.8 366.4l3.9 3.9 3.9 2.2 3.9-1.3 3.9-3.4 3.8-3.6 3.7-4.5 3.6-4.7 3.3-4.4 3.4-5 3.4-4.7 3.4-3.8 3.3-1.5 3.3-0.3 3.4 0.3 3.4 0.5 3.4 0.6 3.4 0.7 3.4 0.6 3.5 0.6 3.4 0.6 3.7 0.6 3.7 0.7 4 0.7 4 0.7 4 0.6 4 0.6 4 0.6 4 0.5 4 0.5 4 0.5 4 0.5 4 0.4 4 0.4 4 0.4 4 0.4 4 0.4 4 0.3 4 0.3 4 0.2 4 0.2M914.7 365.5l3.9 3.8 3.8 2.3 3.9-1.4 3.8-3.4 3.9-3.6 3.6-4.5 3.4-4.7 3.3-4.4 3.2-5.1 3.2-5 3.2-4 3.2-1.6 3.2-0.3 3.2 0.4 3.2 0.5 3.4 0.6 3.2 0.7 3.3 0.7 3.3 0.6 3.4 0.6 3.5 0.7 3.7 0.7 4 0.7 4 0.8 4 0.7 4 0.6 4 0.6 4 0.5 4 0.6 4 0.5 4 0.5 4 0.4 4 0.5 4 0.4 4 0.4 4 0.4 4 0.3 4 0.3 4 0.2 4 0.2M948.7 346l3.2-3.7 3.1-3 3.1-1.1 3.1-0.2 3.1 0.2 3.2 0.4 3.2 0.5 3.2 0.5 3.2 0.5 3.2 0.4 3.4 0.5 3.4 0.5 3.7 0.5 4 0.5 4 0.6 4 0.5 4 0.5 4 0.4 4 0.4 4 0.4 4 0.4 4 0.3 4 0.4 4 0.3 4 0.3 4 0.3 4 0.4 4 0.3 4 0.3 4 0.3 4 0.1M949.5 344.9l3.1-5 3.1-4.1 3.1-1.6 3-0.3 3.1 0.4 3.1 0.5 3.2 0.7 3.1 0.6 3.2 0.7 3.1 0.6 3.3 0.6 3.5 0.7 3.6 0.7 4 0.8 4 0.7 4 0.7 4 0.6 4 0.6 4 0.6 4 0.5 4 0.5 4 0.5 4 0.5 4 0.4 4 0.4 4 0.5 4 0.3 4 0.3 4 0.3 4 0.2 4 0.2"/>
<path id="f2th" d="M897.3 362.4l4 3.3 4.1 1.9 4-1.2 4-2.8 4-3.1 4.1-3.8 4.1-4 4.1-3.7 4.1-3.7 4.1-2.7 4.1-2.2 4.1-0.9 4.1-0.2 4.2 0.2 4.1 0.3 4.1 0.4 4.1 0.3 4.1 0.4 4.1 0.3 4.1 0.4 4 0.3 4.1 0.4 4 0.4 4 0.4 4 0.4 4 0.3 4 0.3 4 0.4 4 0.2 4 0.3 4 0.3 4 0.2 4 0.3 4 0.2 4 0.2 4 0.3 4 0.3 4 0.3 4 0.2 4 0.1M904 364l4 3.4 4 2 3.9-1.2 4-3 3.9-3.3 3.9-4 3.8-4.2 3.8-3.9 3.8-4.1 3.7-3.4 3.8-2.7 3.8-1.1 3.7-0.2 3.8 0.3 3.8 0.3 3.8 0.5 3.7 0.4 3.8 0.5 3.8 0.4 3.8 0.4 3.9 0.5 3.9 0.4 4 0.5 4 0.5 4 0.5 4 0.4 4 0.4 4 0.4 4 0.4 4 0.3 4 0.4 4 0.3 4 0.2 4 0.3 4 0.4 4 0.3 4 0.3 4 0.2 4 0.2 4 0.2M907 364.1l4 3.3 3.9 2 4-1.2 3.9-2.9 3.9-3.2 3.8-3.9 3.7-4.1 3.7-3.8 3.6-4.5 3.6-4.6 3.6-3.9 3.6-1.4 3.6-0.3 3.6 0.3 3.6 0.5 3.7 0.6 3.6 0.7 3.6 0.6 3.7 0.6 3.7 0.5 3.7 0.7 3.9 0.7 4 0.6 4 0.7 4 0.7 4 0.6 4 0.5 4 0.5 4 0.5 4 0.5 4 0.5 4 0.4 4 0.4 4 0.4 4 0.4 4 0.3 4 0.3 4 0.3 4 0.2 4 0.1M910.4 364.2l4 3.3 3.9 2 3.9-1.2 3.9-2.9 3.8-3.2 3.8-3.9 3.6-4 3.4-3.9 3.4-4.5 3.5-4.7 3.4-3.9 3.5-1.4 3.4-0.3 3.4 0.3 3.4 0.5 3.5 0.6 3.5 0.7 3.5 0.6 3.5 0.6 3.5 0.6 3.7 0.6 3.8 0.7 4 0.7 4 0.7 4 0.6 4 0.6 4 0.6 4 0.5 4 0.5 4 0.5 4 0.5 4 0.4 4 0.4 4 0.4 4 0.4 4 0.3 4 0.3 4 0.3 4 0.2 4 0.1"/>
<path id="f2red" d="M790.1 139.9l4 0.3 4 0.3 4 0.5 4 0.6 4 0.8 4 1 4.1 1.4 4 1.8 4.1 2.3 4.1 2.8 4.1 3.5M909.1 355.8l3.9 2.9 3.9 2.4 3.9 1.4 3.9-0.9 3.9-2.1 3.8-2.2"/>
<path id="f2rt" d="M954.5 338.5l3.2-0.7 3.3 0.1 3.3 0.3 3.3 0.4 3.4 0.5 3.4 0.5 3.3 0.4 3.4 0.4 3.5 0.5 3.7 0.5 3.9 0.5 4 0.6 4 0.5 4 0.4 4 0.5 4 0.4 4 0.4 4 0.4 4 0.3 4 0.3 4 0.3 4 0.3 4 0.4 4 0.2 4 0.2 4 0.2 4 0.2 4 0.1 4 0.1 4 0 4 0"/>
<path id="f2org" d="M766.1 139.4l4 0 4 0 4 0.1 4 0.1 4 0.2 4 0.1 4 0.3 4 0.3 4 0.5 4 0.6 4 0.8 4 1 4.1 1.4 4 1.8 4.1 2.3 4.1 2.8 4.1 3.5 4.1 4.4 4.1 5.7 4.1 7.5 4.1 10.2 4.3 11 4.4 11.1 4.5 11.4 4.4 10.9 4.3 11.2 4.2 13.6 4.2 16.2 4.1 17.1 4 17.1 4 18.5 4 16.7 3.9 11 4 3.3 3.9 3.7 3.9 2.9 3.9 2.4 3.9 1.4 3.9-0.9 3.9-2.1 3.8-2.2 3.7-2.8 3.5-2.9 3.3-2.8 3.3-3.3 3.3-3.5 3.3-2.9 3.3-1.1 3.2-0.2 3.3 0.2 3.3 0.4 3.4 0.5 3.4 0.4 3.3 0.5 3.4 0.4 3.5 0.5 3.5 0.5 3.8 0.5 4 0.5 4 0.5 4 0.5 4 0.5 4 0.4 4 0.4 4 0.4 4 0.3 4 0.4 4 0.3 4 0.3 4 0.3 4 0.3 4 0.2 4 0.2 4 0.2 4 0.2 4 0.1 4 0 4 0 4 0"/>
<path id="rl" d="M14.7 139.2l6 0 6 0 6 0 6-0.1 6-0.1 6 0 6-0.1 6 0 6 0 6 0 6 0 6 0 6 0.1 6 0.1 6 0.1 6 0.1 6 0.2 6 0.1 6 0.2 5.8 0.1M14.7 346.6l6 0 6 0 6 0 6-0.1 6-0.1 6 0 6-0.1 6 0 6 0 6 0 6 0 6 0 6 0.1 6 0.1 6 0.1 6 0.1 6 0.2 6 0.1 6 0.2 5.8 0.1M281.5 139.5l6 0 6 0 6 0 6 0 6-0.1 6-0.1 6-0.1 6-0.1 6-0.1 6-0.1 6-0.1 6-0.1 6-0.1 6 0 6 0 6 0 6 0 6 0.1 6 0.1 6 0.1 6 0.1 6 0.2 6 0.1 6 0.1 6 0.2 6 0 6 0.1 6 0.1 6 0 6 0 6 0 6 0 6-0.1 6 0 6-0.1 6 0 6 0 6-0.1 6 0 6 0 6 0.1 6 0 6 0.1 6 0 6 0.1 6 0.1 6 0 6 0.1 6 0 6 0 6 0 6 0 6-0.1 6-0.1 6-0.1 6-0.1 6-0.2 6-0.1 6-0.2 6-0.1 6-0.1 6-0.1 6-0.1 6 0 6 0 6 0 6 0 6 0.1 6 0 6 0.1 6 0.1 6 0.1 6 0.1 6 0.1 6 0 6 0 6 0 6 0 6 0 6 0 6 0M281.5 346.9l6 0 6 0 6 0 6 0 6-0.1 6-0.1 6-0.1 6-0.1 6-0.1 6-0.1 6-0.1 6-0.1 6-0.1 6 0 6 0 6 0 6 0 6 0.1 6 0.1 6 0.1 6 0.1 6 0.2 6 0.1 6 0.1 6 0.2 6 0 6 0.1 6 0.1 6 0 6 0 6 0 6 0 6-0.1 6 0 6-0.1 6 0 6 0 6-0.1 6 0 6 0 6 0.1 6 0 6 0.1 6 0 6 0.1 6 0.1 6 0 6 0.1 6 0 6 0 6 0 6 0 6-0.1 6-0.1 6-0.1 6-0.1 6-0.2 6-0.1 6-0.2 6-0.1 6-0.1 6-0.1 6-0.1 6 0 6 0 6 0 6 0 6 0.1 6 0 6 0.1 6 0.1 6 0.1 6 0.1 6 0.1 6 0 6 0 6 0 6 0 6 0 6 0 6 0M914.5 139.8l6-0.1 6-0.1 6-0.2 6-0.1 6-0.1 6 0 6-0.1 6 0 6 0 6 0 6 0 6 0.1 6 0 6-0.1 6-0.2 6-0.2 6-0.2 6-0.3 6-0.3 6-0.2 6-0.3 6-0.4 6-0.3 6-0.3 6-0.3 6-0.3M914.5 347.2l6-0.1 6-0.1 6-0.2 6-0.1 6-0.1 6 0 6-0.1 6 0 6 0 6 0 6 0 6 0.1 6 0 6 0.1 6 0.1 6 0.2 6 0.1 6 0.1 6 0 6 0.1 6 0 6 0 6 0 6 0.1 6 0 6 0"/>
<path id="rn" d="M161.5 140.2l6 0 6 0 6-0.1 6-0.1 6-0.1 6-0.1 6-0.1 6-0.1 6-0.1 6 0 6-0.1 6 0 6 0 6 0 6 0 3 0M161.5 347.6l6 0 6 0 6-0.1 6-0.1 6-0.1 6-0.1 6-0.1 6-0.1 6-0.1 6 0 6-0.1 6 0 6 0 6 0 6 0 3 0M794.5 139.1l6 0.1 6 0 6 0 6 0.1 6 0.1 6 0.1 6 0.2 6 0.1 6 0.1 6 0.1 6 0.1 6 0.1 6 0 6 0 6 0 3 0M794.5 346.5l6 0.1 6 0 6 0 6 0.1 6 0.1 6 0.1 6 0.2 6 0.1 6 0.1 6 0.1 6 0.1 6 0.1 6 0 6 0 6 0 3 0"/>
<path id="rm" d="M131.5 139.8l6 0.1 6 0.1 6 0.1 6 0.1 6 0 3 0M131.5 347.2l6 0.1 6 0.1 6 0.1 6 0.1 6 0 3 0M251.5 139.4l6 0 6 0 6 0.1 6 0 6 0 3 0M251.5 346.8l6 0 6 0 6 0.1 6 0 6 0 3 0M764.5 139.3l6-0.1 6 0 6 0 6-0.1 6 0 3 0M764.5 346.7l6-0.1 6 0 6 0 6-0.1 6 0 3 0M884.5 140.2l6 0 6-0.1 6-0.1 6-0.1 6-0.1 3 0M884.5 347.6l6 0 6-0.1 6-0.1 6-0.1 6-0.1 3 0"/>
</defs>
<rect x="14.7" y="41.5" width="1055.8" height="403.7" fill="#000" stroke="#1c1c1c" stroke-width="1"/>
<path d="M14.7 41.5V445.2M1070.5 41.5V445.2" stroke="#303030" stroke-width="1" fill="none"/>
<g clip-path="url(#gc)" fill="none" stroke-linejoin="round" stroke-linecap="round">
<use href="#rl" stroke="#1200e0" stroke-width="7.8"/>
<use href="#rm" stroke="#1200e0" stroke-width="7.0"/>
<use href="#rn" stroke="#1200e0" stroke-width="6.2"/>
<use href="#f1lo" stroke="#0c00d4" stroke-width="4.4"/>
<use href="#f1mid" stroke="#0c00d4" stroke-width="4.4"/>
<use href="#f1hi" stroke="#0c00d4" stroke-width="4.4"/>
<use href="#f1top" stroke="#0c00d4" stroke-width="4.4"/>
<use href="#f1org" stroke="#0c00d4" stroke-width="4.4"/>
<use href="#r1lo" stroke="#0c00d4" stroke-width="4.4"/>
<use href="#r1mid" stroke="#0c00d4" stroke-width="4.4"/>
<use href="#r1hi" stroke="#0c00d4" stroke-width="4.4"/>
<use href="#r1org" stroke="#0c00d4" stroke-width="4.4"/>
<use href="#f2lo" stroke="#0c00d4" stroke-width="4.4"/>
<use href="#f2mid" stroke="#0c00d4" stroke-width="4.4"/>
<use href="#f2hi" stroke="#0c00d4" stroke-width="4.4"/>
<use href="#f2top" stroke="#0c00d4" stroke-width="4.4"/>
<use href="#f2org" stroke="#0c00d4" stroke-width="4.4"/>
<use href="#r2lo" stroke="#0c00d4" stroke-width="4.4"/>
<use href="#r2mid" stroke="#0c00d4" stroke-width="4.4"/>
<use href="#r2hi" stroke="#0c00d4" stroke-width="4.4"/>
<use href="#r2org" stroke="#0c00d4" stroke-width="4.4"/>
<use href="#f1lo" stroke="#0038f4" stroke-width="2.8"/>
<use href="#f1mid" stroke="#0038f4" stroke-width="2.8"/>
<use href="#f1hi" stroke="#0038f4" stroke-width="2.8"/>
<use href="#f1top" stroke="#0038f4" stroke-width="2.8"/>
<use href="#f1org" stroke="#0038f4" stroke-width="2.8"/>
<use href="#r1lo" stroke="#0038f4" stroke-width="2.8"/>
<use href="#r1mid" stroke="#0038f4" stroke-width="2.8"/>
<use href="#r1hi" stroke="#0038f4" stroke-width="2.8"/>
<use href="#r1org" stroke="#0038f4" stroke-width="2.8"/>
<use href="#f2lo" stroke="#0038f4" stroke-width="2.8"/>
<use href="#f2mid" stroke="#0038f4" stroke-width="2.8"/>
<use href="#f2hi" stroke="#0038f4" stroke-width="2.8"/>
<use href="#f2top" stroke="#0038f4" stroke-width="2.8"/>
<use href="#f2org" stroke="#0038f4" stroke-width="2.8"/>
<use href="#r2lo" stroke="#0038f4" stroke-width="2.8"/>
<use href="#r2mid" stroke="#0038f4" stroke-width="2.8"/>
<use href="#r2hi" stroke="#0038f4" stroke-width="2.8"/>
<use href="#r2org" stroke="#0038f4" stroke-width="2.8"/>
<use href="#f1lo" stroke="#00a0f0" stroke-width="1.2"/>
<use href="#r1lo" stroke="#00a0f0" stroke-width="1.2"/>
<use href="#f2lo" stroke="#00a0f0" stroke-width="1.2"/>
<use href="#r2lo" stroke="#00a0f0" stroke-width="1.2"/>
<use href="#f1mid" stroke="#00b8f0" stroke-width="1.7"/>
<use href="#f1hi" stroke="#00b8f0" stroke-width="1.7"/>
<use href="#f1top" stroke="#00b8f0" stroke-width="1.7"/>
<use href="#f1org" stroke="#00b8f0" stroke-width="1.7"/>
<use href="#r1mid" stroke="#00b8f0" stroke-width="1.7"/>
<use href="#r1hi" stroke="#00b8f0" stroke-width="1.7"/>
<use href="#r1org" stroke="#00b8f0" stroke-width="1.7"/>
<use href="#f2mid" stroke="#00b8f0" stroke-width="1.7"/>
<use href="#f2hi" stroke="#00b8f0" stroke-width="1.7"/>
<use href="#f2top" stroke="#00b8f0" stroke-width="1.7"/>
<use href="#f2org" stroke="#00b8f0" stroke-width="1.7"/>
<use href="#r2mid" stroke="#00b8f0" stroke-width="1.7"/>
<use href="#r2hi" stroke="#00b8f0" stroke-width="1.7"/>
<use href="#r2org" stroke="#00b8f0" stroke-width="1.7"/>
<use href="#f1mid" stroke="#00e4e0" stroke-width="0.9"/>
<use href="#r1mid" stroke="#00e4e0" stroke-width="0.9"/>
<use href="#f2mid" stroke="#00e4e0" stroke-width="0.9"/>
<use href="#r2mid" stroke="#00e4e0" stroke-width="0.9"/>
<use href="#f1hi" stroke="#10e890" stroke-width="1.5"/>
<use href="#f1top" stroke="#10e890" stroke-width="1.5"/>
<use href="#f1org" stroke="#10e890" stroke-width="1.5"/>
<use href="#r1hi" stroke="#10e890" stroke-width="1.5"/>
<use href="#r1org" stroke="#10e890" stroke-width="1.5"/>
<use href="#f2hi" stroke="#10e890" stroke-width="1.5"/>
<use href="#f2top" stroke="#10e890" stroke-width="1.5"/>
<use href="#f2org" stroke="#10e890" stroke-width="1.5"/>
<use href="#r2hi" stroke="#10e890" stroke-width="1.5"/>
<use href="#r2org" stroke="#10e890" stroke-width="1.5"/>
<use href="#f1hi" stroke="#50f040" stroke-width="0.9"/>
<use href="#r1hi" stroke="#50f040" stroke-width="0.9"/>
<use href="#f2hi" stroke="#50f040" stroke-width="0.9"/>
<use href="#r2hi" stroke="#50f040" stroke-width="0.9"/>
<use href="#f1top" stroke="#a0f020" stroke-width="1.3"/>
<use href="#f1org" stroke="#a0f020" stroke-width="1.3"/>
<use href="#r1org" stroke="#a0f020" stroke-width="1.3"/>
<use href="#f2top" stroke="#a0f020" stroke-width="1.3"/>
<use href="#f2org" stroke="#a0f020" stroke-width="1.3"/>
<use href="#r2org" stroke="#a0f020" stroke-width="1.3"/>
<use href="#f1top" stroke="#e0e800" stroke-width="0.8"/>
<use href="#f2top" stroke="#e0e800" stroke-width="0.8"/>
<use href="#f1org" stroke="#ffb000" stroke-width="1.2"/>
<use href="#r1org" stroke="#ffb000" stroke-width="1.2"/>
<use href="#f2org" stroke="#ffb000" stroke-width="1.2"/>
<use href="#r2org" stroke="#ffb000" stroke-width="1.2"/>
<use href="#f1tl" stroke="#30e870" stroke-width="1.5"/>
<use href="#f1th" stroke="#30e870" stroke-width="1.5"/>
<use href="#r1tl" stroke="#30e870" stroke-width="1.5"/>
<use href="#r1th" stroke="#30e870" stroke-width="1.5"/>
<use href="#f2tl" stroke="#30e870" stroke-width="1.5"/>
<use href="#f2th" stroke="#30e870" stroke-width="1.5"/>
<use href="#r2tl" stroke="#30e870" stroke-width="1.5"/>
<use href="#r2th" stroke="#30e870" stroke-width="1.5"/>
<use href="#f1th" stroke="#d8f000" stroke-width="1.1"/>
<use href="#r1th" stroke="#d8f000" stroke-width="1.1"/>
<use href="#f2th" stroke="#d8f000" stroke-width="1.1"/>
<use href="#r2th" stroke="#d8f000" stroke-width="1.1"/>
<g clip-path="url(#bf1)">
<use href="#r1lo" stroke="#20e8a0" stroke-width="1.2"/>
<use href="#r1mid" stroke="#20e8a0" stroke-width="1.2"/>
<use href="#r1hi" stroke="#90f030" stroke-width="1.2"/>
</g>
<g clip-path="url(#br1)">
<use href="#f1lo" stroke="#20e8a0" stroke-width="1.2"/>
<use href="#f1mid" stroke="#20e8a0" stroke-width="1.2"/>
<use href="#f1hi" stroke="#90f030" stroke-width="1.2"/>
<use href="#f1top" stroke="#90f030" stroke-width="1.2"/>
</g>
<g clip-path="url(#bf2)">
<use href="#r2lo" stroke="#20e8a0" stroke-width="1.2"/>
<use href="#r2mid" stroke="#20e8a0" stroke-width="1.2"/>
<use href="#r2hi" stroke="#90f030" stroke-width="1.2"/>
</g>
<g clip-path="url(#br2)">
<use href="#f2lo" stroke="#20e8a0" stroke-width="1.2"/>
<use href="#f2mid" stroke="#20e8a0" stroke-width="1.2"/>
<use href="#f2hi" stroke="#90f030" stroke-width="1.2"/>
<use href="#f2top" stroke="#90f030" stroke-width="1.2"/>
</g>
<use href="#rl" stroke="#00c8ff" stroke-width="6.7"/>
<use href="#rm" stroke="#00c8ff" stroke-width="5.8"/>
<use href="#rn" stroke="#00c8ff" stroke-width="4.9"/>
<use href="#rl" stroke="#40ff60" stroke-width="6.1"/>
<use href="#rm" stroke="#40ff60" stroke-width="5.2"/>
<use href="#rn" stroke="#40ff60" stroke-width="4.2"/>
<use href="#rl" stroke="#ffe000" stroke-width="5.5"/>
<use href="#rm" stroke="#ffe000" stroke-width="4.5"/>
<use href="#rn" stroke="#ffe000" stroke-width="3.6"/>
<use href="#f1rt" stroke="#f0e000" stroke-width="4.0"/>
<use href="#r1rt" stroke="#f0e000" stroke-width="4.0"/>
<use href="#f2rt" stroke="#f0e000" stroke-width="4.0"/>
<use href="#r2rt" stroke="#f0e000" stroke-width="4.0"/>
<use href="#f1rt" stroke="#ff2000" stroke-width="2.9"/>
<use href="#r1rt" stroke="#ff2000" stroke-width="2.9"/>
<use href="#f2rt" stroke="#ff2000" stroke-width="2.9"/>
<use href="#r2rt" stroke="#ff2000" stroke-width="2.9"/>
<use href="#f1red" stroke="#ff3000" stroke-width="2.2"/>
<use href="#r1red" stroke="#ff3000" stroke-width="2.2"/>
<use href="#f2red" stroke="#ff3000" stroke-width="2.2"/>
<use href="#r2red" stroke="#ff3000" stroke-width="2.2"/>
<use href="#rl" stroke="#e20000" stroke-width="4.7"/>
<use href="#rm" stroke="#e20000" stroke-width="3.8"/>
<use href="#rn" stroke="#e20000" stroke-width="2.9"/>
</g>
<path d="M121.0 42.5V444.2M226.5 42.5V444.2M332.0 42.5V444.2M437.5 42.5V444.2M648.5 42.5V444.2M754.0 42.5V444.2M859.5 42.5V444.2M965.0 42.5V444.2M15.7 92.0H1069.5M15.7 142.4H1069.5M15.7 192.9H1069.5M15.7 293.8H1069.5M15.7 344.3H1069.5M15.7 394.7H1069.5" stroke="#8e8e8e" stroke-opacity="0.78" stroke-width="0.9" stroke-dasharray="0.95 1.58" fill="none"/>
<path d="M36.0 117.2h1.2M57.1 117.2h1.2M78.2 117.2h1.2M99.3 117.2h1.2M120.4 117.2h1.2M141.5 117.2h1.2M162.6 117.2h1.2M183.7 117.2h1.2M204.8 117.2h1.2M225.9 117.2h1.2M247.0 117.2h1.2M268.1 117.2h1.2M289.2 117.2h1.2M310.3 117.2h1.2M331.4 117.2h1.2M352.5 117.2h1.2M373.6 117.2h1.2M394.7 117.2h1.2M415.8 117.2h1.2M436.9 117.2h1.2M458.0 117.2h1.2M479.1 117.2h1.2M500.2 117.2h1.2M521.3 117.2h1.2M542.4 117.2h1.2M563.5 117.2h1.2M584.6 117.2h1.2M605.7 117.2h1.2M626.8 117.2h1.2M647.9 117.2h1.2M669.0 117.2h1.2M690.1 117.2h1.2M711.2 117.2h1.2M732.3 117.2h1.2M753.4 117.2h1.2M774.5 117.2h1.2M795.6 117.2h1.2M816.7 117.2h1.2M837.8 117.2h1.2M858.9 117.2h1.2M880.0 117.2h1.2M901.1 117.2h1.2M922.2 117.2h1.2M943.3 117.2h1.2M964.4 117.2h1.2M985.5 117.2h1.2M1006.6 117.2h1.2M1027.7 117.2h1.2M1048.8 117.2h1.2M36.0 369.5h1.2M57.1 369.5h1.2M78.2 369.5h1.2M99.3 369.5h1.2M120.4 369.5h1.2M141.5 369.5h1.2M162.6 369.5h1.2M183.7 369.5h1.2M204.8 369.5h1.2M225.9 369.5h1.2M247.0 369.5h1.2M268.1 369.5h1.2M289.2 369.5h1.2M310.3 369.5h1.2M331.4 369.5h1.2M352.5 369.5h1.2M373.6 369.5h1.2M394.7 369.5h1.2M415.8 369.5h1.2M436.9 369.5h1.2M458.0 369.5h1.2M479.1 369.5h1.2M500.2 369.5h1.2M521.3 369.5h1.2M542.4 369.5h1.2M563.5 369.5h1.2M584.6 369.5h1.2M605.7 369.5h1.2M626.8 369.5h1.2M647.9 369.5h1.2M669.0 369.5h1.2M690.1 369.5h1.2M711.2 369.5h1.2M732.3 369.5h1.2M753.4 369.5h1.2M774.5 369.5h1.2M795.6 369.5h1.2M816.7 369.5h1.2M837.8 369.5h1.2M858.9 369.5h1.2M880.0 369.5h1.2M901.1 369.5h1.2M922.2 369.5h1.2M943.3 369.5h1.2M964.4 369.5h1.2M985.5 369.5h1.2M1006.6 369.5h1.2M1027.7 369.5h1.2M1048.8 369.5h1.2" stroke="#777" stroke-width="1.1" fill="none"/>
<path d="M15.2 243.3H1070.0M543.0 42.0V444.7M15.5 240.7v5.4M36.6 240.7v5.4M57.7 240.7v5.4M78.8 240.7v5.4M99.9 240.7v5.4M121.0 240.7v5.4M142.1 240.7v5.4M163.2 240.7v5.4M184.3 240.7v5.4M205.4 240.7v5.4M226.5 240.7v5.4M247.6 240.7v5.4M268.7 240.7v5.4M289.8 240.7v5.4M310.9 240.7v5.4M332.0 240.7v5.4M353.1 240.7v5.4M374.2 240.7v5.4M395.3 240.7v5.4M416.4 240.7v5.4M437.5 240.7v5.4M458.6 240.7v5.4M479.7 240.7v5.4M500.8 240.7v5.4M521.9 240.7v5.4M543.0 240.7v5.4M564.1 240.7v5.4M585.2 240.7v5.4M606.3 240.7v5.4M627.4 240.7v5.4M648.5 240.7v5.4M669.6 240.7v5.4M690.7 240.7v5.4M711.8 240.7v5.4M732.9 240.7v5.4M754.0 240.7v5.4M775.1 240.7v5.4M796.2 240.7v5.4M817.3 240.7v5.4M838.4 240.7v5.4M859.5 240.7v5.4M880.6 240.7v5.4M901.7 240.7v5.4M922.8 240.7v5.4M943.9 240.7v5.4M965.0 240.7v5.4M986.1 240.7v5.4M1007.2 240.7v5.4M1028.3 240.7v5.4M1049.4 240.7v5.4M541.2 51.6h3.6M541.2 61.7h3.6M541.2 71.8h3.6M541.2 81.9h3.6M541.2 92.0h3.6M541.2 102.1h3.6M541.2 112.1h3.6M541.2 122.2h3.6M541.2 132.3h3.6M541.2 142.4h3.6M541.2 152.5h3.6M541.2 162.6h3.6M541.2 172.7h3.6M541.2 182.8h3.6M541.2 192.9h3.6M541.2 203.0h3.6M541.2 213.1h3.6M541.2 223.2h3.6M541.2 233.3h3.6M541.2 243.3h3.6M541.2 253.4h3.6M541.2 263.5h3.6M541.2 273.6h3.6M541.2 283.7h3.6M541.2 293.8h3.6M541.2 303.9h3.6M541.2 314.0h3.6M541.2 324.1h3.6M541.2 334.2h3.6M541.2 344.3h3.6M541.2 354.4h3.6M541.2 364.5h3.6M541.2 374.6h3.6M541.2 384.6h3.6M541.2 394.7h3.6M541.2 404.8h3.6M541.2 414.9h3.6M541.2 425.0h3.6M541.2 435.1h3.6" stroke="#707070" stroke-width="1" fill="none"/>
<g font-family="Liberation Sans, sans-serif" fill="#e6e6e6" font-size="15.2">
<text x="759.5" y="96" transform="matrix(1 0 0 1.08 0 -7.68)">Clock Rate: 249.99M</text><text x="759.5" y="113.6" transform="matrix(1 0 0 1.08 0 -9.09)">Seg Num: 12.444k UI</text></g>
<rect x="904.4" y="355.1" width="35.8" height="18.3" fill="#fb0006"/>
<text x="907" y="368.7" transform="matrix(1 0 0 1.07 0 -25.8)" font-family="Liberation Sans, sans-serif" font-size="13.4" fill="#f0f0f0">Processing</text>
<path d="M0 238.2H11.2L12.5 239.5V242.2L14.1 243.9L12.5 245.6V248.3L11.2 249.6H0Z" fill="#f0108c"/>
<text x="0.2" y="246.6" font-family="Liberation Sans, sans-serif" font-size="7.2" font-weight="bold" fill="#4a0a30">C2</text>
<path d="M1070 246.2L1063.4 252.2L1070 258.2Z" fill="#f0108c"/>
</svg>
<div id="panel"></div>
<div class="row a" style="top:451.00px">
<div class="cell" style="left:5.8px;top:2.4px">测量项</div>
<div class="cell pk" style="left:155.6px;top:2.4px">1.时间间隔误差(C2)</div>
<div class="cell pk" style="left:304.8px;top:2.4px">2.眼宽(C2)</div>
<div class="cell pk" style="left:454.0px;top:2.4px">3.眼高(C2)</div>
<div class="cell pk" style="left:603.3px;top:2.4px">4.上升时间(C2)</div>
<div class="cell pk" style="left:752.8px;top:2.4px">5.下降时间(C2)</div>
<div class="cell pk" style="left:902.0px;top:2.4px">6.眼图交叉比(C2)</div>
</div>
<div class="row b" style="top:467.75px">
<div class="cell" style="left:5.8px">当前值</div>
<div class="cell" style="left:155.6px">113.4ps</div>
<div class="cell" style="left:304.8px">3.5947ns</div>
<div class="cell" style="left:454.0px">795.3mV</div>
<div class="cell" style="left:603.3px">250.7ps</div>
<div class="cell" style="left:752.8px">234.7ps</div>
<div class="cell" style="left:902.0px">55.429%</div>
</div>
<div class="row a" style="top:484.50px">
<div class="cell" style="left:5.8px">平均值</div>
<div class="cell" style="left:155.6px">-32.994ps</div>
<div class="cell" style="left:304.8px">4.679170ns</div>
<div class="cell" style="left:454.0px">547.25mV</div>
<div class="cell" style="left:603.3px">297.276ps</div>
<div class="cell" style="left:752.8px">297.319ps</div>
<div class="cell" style="left:902.0px">50.93794%</div>
</div>
<div class="row b" style="top:501.25px">
<div class="cell" style="left:5.8px">最小值</div>
<div class="cell" style="left:155.6px">-1.7561ns</div>
<div class="cell" style="left:304.8px">330.3ps</div>
<div class="cell" style="left:454.0px">-632.9mV</div>
<div class="cell" style="left:603.3px">-27.27ps</div>
<div class="cell" style="left:752.8px">175.5ps</div>
<div class="cell" style="left:902.0px">-40.800%</div>
</div>
<div class="row a" style="top:518.00px">
<div class="cell" style="left:5.8px">最大值</div>
<div class="cell" style="left:155.6px">1.1014ns</div>
<div class="cell" style="left:304.8px">9.7600ns</div>
<div class="cell" style="left:454.0px">804.7mV</div>
<div class="cell" style="left:603.3px">2.0133ns</div>
<div class="cell" style="left:752.8px">2.0400ns</div>
<div class="cell" style="left:902.0px">77.731%</div>
</div>
<div class="row b" style="top:534.75px">
<div class="cell" style="left:5.8px">峰--峰值</div>
<div class="cell" style="left:155.6px">2.857500ns</div>
<div class="cell" style="left:304.8px">9.429700ns</div>
<div class="cell" style="left:454.0px">1.43760V</div>
<div class="cell" style="left:603.3px">2.040570ns</div>
<div class="cell" style="left:752.8px">1.864500ns</div>
<div class="cell" style="left:902.0px">118.53109%</div>
</div>
<div class="row a" style="top:551.50px">
<div class="cell" style="left:5.8px">标准差</div>
<div class="cell" style="left:155.6px">131.552ps</div>
<div class="cell" style="left:304.8px">3.311183ns</div>
<div class="cell" style="left:454.0px">208.42mV</div>
<div class="cell" style="left:603.3px">271.502ps</div>
<div class="cell" style="left:752.8px">281.363ps</div>
<div class="cell" style="left:902.0px">7.38329%</div>
</div>
<div class="row b" style="top:568.25px">
<div class="cell" style="left:5.8px">统计次数</div>
<div class="cell" style="left:155.6px">2103058</div>
<div class="cell" style="left:304.8px">231</div>
<div class="cell" style="left:454.0px">231</div>
<div class="cell" style="left:603.3px">231</div>
<div class="cell" style="left:752.8px">231</div>
<div class="cell" style="left:902.0px">231</div>
</div>
<div class="sep" style="left:152.0px"></div>
<div class="sep" style="left:300.8px"></div>
<div class="sep" style="left:450.0px"></div>
<div class="sep" style="left:599.2px"></div>
<div class="sep" style="left:748.4px"></div>
<div class="sep" style="left:897.6px"></div>
<div class="dash" style="left:288.8px"></div>
<div class="dash" style="left:438.0px"></div>
<div class="dash" style="left:587.2px"></div>
<div class="dash" style="left:736.4px"></div>
<div class="dash" style="left:885.6px"></div>
<div class="dash" style="left:1034.8px"></div>
<div class="abs" style="left:1050.8px;top:451.2px;width:24.8px;height:25.2px;background:#2b2b2b"><svg width="24.8" height="25.2" viewBox="0 0 24.8 25.2"><path d="M5.4 5.6L19.4 19.6M19.4 5.6L5.4 19.6" stroke="#424242" stroke-width="1.3"/></svg></div>
<div class="abs" style="left:2px;top:585.6px;width:1047px;height:1px;background:#1c1c1c"></div>
<div class="abs" style="left:7px;top:596.5px;font-size:13.5px;line-height:16px;white-space:nowrap">直方图</div>
<div class="abs" style="left:152px;top:586px;width:1px;height:30px;background:#181818"></div>
<svg class="abs" style="left:0;top:0" width="1080" height="675" viewBox="0 0 1080 675" fill="none"><path d="M173 613.8H274" stroke="#f0108c" stroke-width="1.5"/><path d="M235.2 613.8V590" stroke="#c01078" stroke-width="1"/><path d="M235.2 613.8V606" stroke="#f0108c" stroke-width="1.6"/><path d="M233.6 613.8V611" stroke="#f0108c" stroke-width="2.6"/><path d="M236.6 613.8V611.6" stroke="#f0108c" stroke-width="1.6"/><path d="M322.5 613.8H423.8" stroke="#f0108c" stroke-width="1.5"/><path d="M323.4 613.8V601.5" stroke="#f0108c" stroke-width="1"/><path d="M336.3 613.8V607" stroke="#f0108c" stroke-width="1"/><path d="M337.8 613.8V612" stroke="#f0108c" stroke-width="1"/><path d="M340 613.8V601.5" stroke="#f0108c" stroke-width="1"/><path d="M351 613.8V600.6" stroke="#f0108c" stroke-width="1"/><path d="M357 613.8V605" stroke="#f0108c" stroke-width="1"/><path d="M360.4 613.8V590" stroke="#f0108c" stroke-width="1"/><path d="M393.8 613.8V612" stroke="#f0108c" stroke-width="1.5"/><path d="M405.5 613.8V612.4" stroke="#f0108c" stroke-width="1"/><path d="M418.3 613.8V607" stroke="#b01070" stroke-width="1"/><path d="M420.4 613.8V605" stroke="#f0108c" stroke-width="1"/><path d="M421.6 613.8V601" stroke="#f0108c" stroke-width="1"/><path d="M422.8 613.8V611" stroke="#f0108c" stroke-width="1"/><path d="M471.5 613.8H572.6" stroke="#f0108c" stroke-width="1.5"/><path d="M479.6 613.8V612.4" stroke="#f0108c" stroke-width="1"/><path d="M505 613.8V612.2" stroke="#f0108c" stroke-width="1.4"/><path d="M523.6 613.8V612.4" stroke="#f0108c" stroke-width="1"/><path d="M527 613.8V612.4" stroke="#f0108c" stroke-width="1"/><path d="M530.6 613.8V610.4" stroke="#f0108c" stroke-width="1.4"/><path d="M546.6 613.8V605.3" stroke="#f0108c" stroke-width="1.2"/><path d="M548.7 613.8V590" stroke="#d01080" stroke-width="1"/><path d="M548.7 613.8V605" stroke="#f0108c" stroke-width="1.4"/><path d="M560.8 613.8V611.4" stroke="#f0108c" stroke-width="2"/><path d="M564 613.8V601" stroke="#c01078" stroke-width="1"/><path d="M564.6 613.8V610" stroke="#f0108c" stroke-width="1.4"/><path d="M621.3 613.8H721.8" stroke="#f0108c" stroke-width="1.5"/><path d="M622.2 613.8V612.4" stroke="#f0108c" stroke-width="1"/><path d="M632.4 613.8V590" stroke="#f0108c" stroke-width="1.6"/><path d="M634.8 613.8V593" stroke="#c01078" stroke-width="1"/><path d="M633.4 613.8V609" stroke="#f0108c" stroke-width="5"/><path d="M639 613.8V611" stroke="#f0108c" stroke-width="1"/><path d="M640.4 613.8V608.5" stroke="#f0108c" stroke-width="1"/><path d="M641.6 613.8V607" stroke="#f0108c" stroke-width="1"/><path d="M644.8 613.8V604.2" stroke="#f0108c" stroke-width="1.2"/><path d="M645.8 613.8V611" stroke="#f0108c" stroke-width="1"/><path d="M652 613.8V611" stroke="#f0108c" stroke-width="1"/><path d="M720.6 613.8V611.6" stroke="#f0108c" stroke-width="1.4"/><path d="M770.2 613.8H871" stroke="#f0108c" stroke-width="1.5"/><path d="M773.2 613.8V590.4" stroke="#d01080" stroke-width="1"/><path d="M773 613.8V605.3" stroke="#f0108c" stroke-width="4.4"/><path d="M780 613.8V612" stroke="#f0108c" stroke-width="1"/><path d="M782 613.8V607" stroke="#f0108c" stroke-width="1"/><path d="M787.3 613.8V608" stroke="#f0108c" stroke-width="1"/><path d="M794 613.8V612" stroke="#f0108c" stroke-width="1.4"/><path d="M799 613.8V612.6" stroke="#f0108c" stroke-width="1"/><path d="M870.2 613.8V612" stroke="#f0108c" stroke-width="1"/><path d="M920 613.8H1020" stroke="#f0108c" stroke-width="1.5"/><path d="M920.6 613.8V612.6" stroke="#f0108c" stroke-width="1"/><path d="M988.6 613.8V612.6" stroke="#f0108c" stroke-width="1"/><path d="M993.4 613.8V610.6" stroke="#f0108c" stroke-width="1.6"/><path d="M996.2 613.8V589.3" stroke="#d01080" stroke-width="1"/><path d="M996.2 613.8V606" stroke="#f0108c" stroke-width="1.8"/><path d="M998 613.8V611" stroke="#f0108c" stroke-width="1"/><path d="M1000.9 613.8V607.4" stroke="#f0108c" stroke-width="1.2"/><path d="M1018 613.8V612.2" stroke="#f0108c" stroke-width="2"/>
<circle cx="1063.1" cy="596.85" r="12.2" fill="#a8aaa8"/><circle cx="1063.1" cy="596.85" r="10.6" fill="#8f938f"/>
<path d="M1060.40 604.27A7.9 7.9 0 0 1 1060.66 589.34M1065.80 589.43A7.9 7.9 0 0 1 1065.54 604.36" stroke="#d4d8d4" stroke-width="1.9"/>
<path d="M1063.59 588.26L1059.47 586.89L1061.32 591.96ZM1062.61 605.44L1066.73 606.81L1064.88 601.74Z" fill="#d4d8d4"/>
</svg>
<div id="bot"></div>
<div class="abs" style="left:3.3px;top:619.5px;width:107.2px;height:53.8px;background:#3c3c3c;border:1.7px solid #1e78de"></div>
<div class="abs" style="left:5px;top:621.2px;width:103.8px;height:16.8px;background:#242424"></div>
<div class="abs" style="left:5.1px;top:621.9px;width:35.6px;height:15.8px;border-radius:1.6px;background:#f9067f"></div>
<div class="abs" style="left:73.4px;top:622.2px;width:35px;height:15px;background:#161616"></div>
<div class="abs t" style="left:7.6px;top:622.9px;font-size:14.6px;line-height:15px;color:#30081c;white-space:nowrap">EYE</div>
<div class="abs t" style="right:971.8px;top:622.8px;font-size:14px;line-height:15px;color:#ea0a80;white-space:nowrap">DC50</div>
<div class="abs t" style="left:5.6px;top:639.2px;line-height:15px;white-space:nowrap">1X</div>
<div class="abs t" style="right:971.8px;top:639.2px;line-height:15px;white-space:nowrap">200mV/</div>
<div class="abs t" style="left:5.6px;top:656.6px;line-height:15px;white-space:nowrap">FULL</div>
<div class="abs t" style="right:971.8px;top:656.6px;line-height:15px;white-space:nowrap">0.00V</div>
<svg class="abs" style="left:111px;top:619px" width="110" height="56" viewBox="111 619 110 56" fill="none"><rect x="112" y="620.2" width="107.2" height="52.4" stroke="#6a6a6a" stroke-width="1" stroke-dasharray="1 1.5"/><path d="M138 646H192.6M165.7 630.6V662" stroke="#585858" stroke-width="1"/></svg>
<!-- timebase -->
<div class="abs" style="left:764.6px;top:619.8px;width:131.6px;height:53px;background:#3c3c3c"></div>
<div class="abs" style="left:764.6px;top:619.8px;width:131.6px;height:17.8px;background:#1e1e1e"></div>
<div class="abs t" style="left:768.6px;top:621.6px;line-height:15px;white-space:nowrap">时基</div>
<div class="abs t" style="right:187px;top:622px;line-height:15px;white-space:nowrap">ESR</div>
<div class="abs t" style="left:768.2px;top:639.2px;line-height:15px;white-space:nowrap">0.00s</div>
<div class="abs t" style="right:187px;top:639.2px;line-height:15px;white-space:nowrap">5.00us/div</div>
<div class="abs t" style="left:768.2px;top:656.6px;line-height:15px;white-space:nowrap">500kpts</div>
<div class="abs t" style="right:187px;top:656.6px;line-height:15px;white-space:nowrap">10.0GSa/s</div>
<!-- trigger -->
<div class="abs" style="left:898px;top:619.8px;width:113.2px;height:53px;background:#3c3c3c"></div>
<div class="abs" style="left:898px;top:619.8px;width:113.2px;height:17.8px;background:#1e1e1e"></div>
<div class="abs" style="left:969.4px;top:621px;width:17px;height:16px;background:#121212"></div>
<div class="abs" style="left:988.8px;top:621px;width:19.6px;height:16px;background:#121212"></div>
<div class="abs t pk" style="left:901.6px;top:621.6px;line-height:15px;white-space:nowrap">触发</div>
<div class="abs t pk" style="left:970.2px;top:622px;font-size:14px;line-height:15px;white-space:nowrap">C2</div>
<div class="abs t pk" style="left:989.6px;top:622px;font-size:14px;line-height:15px;white-space:nowrap">DC</div>
<div class="abs t" style="left:900.8px;top:638.8px;line-height:15px;white-space:nowrap">单次</div>
<div class="abs t" style="right:72px;top:639.2px;line-height:15px;white-space:nowrap">-34.0mV</div>
<div class="abs t" style="left:900.8px;top:656.2px;line-height:15px;white-space:nowrap">边沿</div>
<div class="abs t" style="right:72px;top:656.2px;line-height:15px;white-space:nowrap">上升沿</div>
<!-- clock -->
<div class="abs" style="left:1012.8px;top:618.8px;width:67.2px;height:56.2px;background:#1b1f1c"></div>
<svg class="abs" style="left:1056px;top:622.6px" width="14" height="14" viewBox="0 0 14 14" fill="none" stroke="#9c9c9c" stroke-width="1.05"><rect x="4.3" y="1.1" width="5" height="4.2" rx="0.6"/><rect x="1.6" y="9.8" width="3" height="3"/><rect x="8.5" y="9.8" width="3" height="3"/><path d="M0.3 7.2H12.9M6.8 5.4V7.2M3.1 7.2V9.4M10 7.2V9.4"/></svg>
<div class="abs t" style="left:1012.8px;width:67.2px;text-align:center;top:642.4px;line-height:15px;white-space:nowrap;padding-left:1px">17:27:50</div>
<div class="abs t" style="left:1012.8px;width:67.2px;text-align:center;top:658px;line-height:15px;white-space:nowrap">2025/5/14</div>
</body>
</html>
